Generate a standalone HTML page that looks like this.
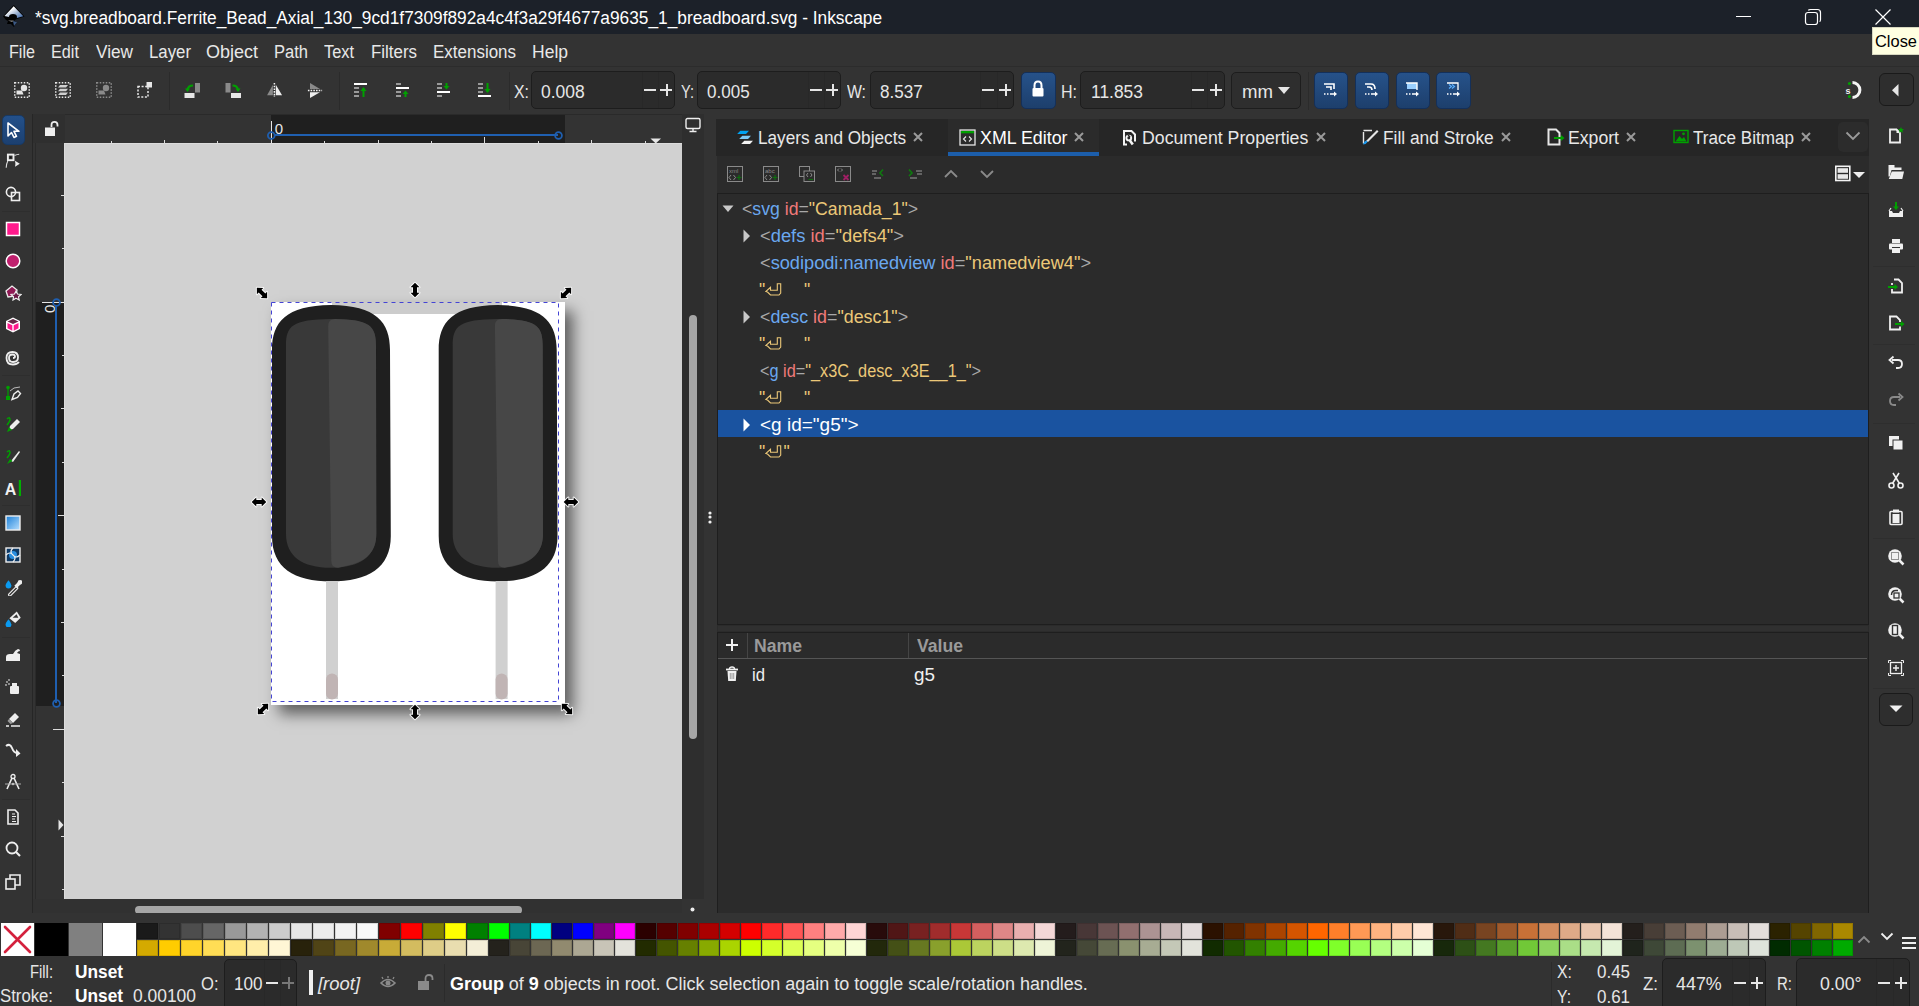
<!DOCTYPE html><html><head><meta charset="utf-8"><style>
html,body{margin:0;padding:0}
body{width:1919px;height:1006px;overflow:hidden;position:relative;background:#333333;font-family:"Liberation Sans",sans-serif}
.a{position:absolute}
.t{position:absolute;line-height:0;white-space:pre;transform-origin:0 0}
</style></head><body>
<div class="a" style="left:0px;top:0px;width:1919px;height:34px;background:#1c2129;"></div>
<svg class="a" style="left:0px;top:0px;" width="34" height="34" viewBox="0 0 34 34"><defs><linearGradient id="lg1" x1="0" y1="0" x2="1" y2="1"><stop offset="0.3" stop-color="#ffffff"/><stop offset="0.6" stop-color="#9fb3d0"/><stop offset="1" stop-color="#2f5fa8"/></linearGradient></defs><path d="M13.7 5 L24.5 16.5 L14 20 L16.5 22 L14 27 L11 24 L7 24 L8 21 L6 20 L3 16.5 Z" fill="#000"/><path d="M13.7 6.3 L23.3 16.3 L15 18.5 L11 17.5 L4.5 16 Z" fill="url(#lg1)"/><ellipse cx="13" cy="17" rx="4" ry="3" fill="#000"/><path d="M8 20.5 L14 20.5 L12 22 Z" fill="#888"/><path d="M13 21 L17 22 L14 26 Z" fill="#3d5a85"/></svg>
<div class="t" style="left:35px;top:17.79px;font-size:18px;color:#ffffff;transform:scaleX(0.9607);">*svg.breadboard.Ferrite_Bead_Axial_130_9cd1f7309f892a4c4f3a29f4677a9635_1_breadboard.svg - Inkscape</div>
<div class="a" style="left:1736px;top:16px;width:15px;height:1.2px;background:#ffffff;"></div>
<svg class="a" style="left:1803px;top:7px;" width="20" height="20" viewBox="0 0 20 20"><rect x="2.5" y="5.5" width="12" height="12" rx="2.5" fill="none" stroke="#fff" stroke-width="1.2"/><path d="M5.5 3.5 Q5.5 2.5 7.5 2.5 L14.5 2.5 Q17.5 2.5 17.5 5.5 L17.5 12.5 Q17.5 14.5 16.5 14.5" fill="none" stroke="#fff" stroke-width="1.2"/></svg>
<svg class="a" style="left:1874px;top:8px;" width="18" height="18" viewBox="0 0 18 18"><path d="M1.5 1.5 L16.5 16.5 M16.5 1.5 L1.5 16.5" stroke="#fff" stroke-width="1.2"/></svg>
<div class="a" style="left:0px;top:34px;width:1919px;height:32px;background:#333333;"></div>
<div class="t" style="left:8.7px;top:52.09px;font-size:18px;color:#e8e8e8;transform:scaleX(0.8964);">File</div>
<div class="t" style="left:50.7px;top:52.09px;font-size:18px;color:#e8e8e8;transform:scaleX(0.9027);">Edit</div>
<div class="t" style="left:96px;top:52.09px;font-size:18px;color:#e8e8e8;transform:scaleX(0.9563);">View</div>
<div class="t" style="left:149px;top:52.09px;font-size:18px;color:#e8e8e8;transform:scaleX(0.9328);">Layer</div>
<div class="t" style="left:206px;top:52.09px;font-size:18px;color:#e8e8e8;transform:scaleX(0.9996);">Object</div>
<div class="t" style="left:274.3px;top:52.09px;font-size:18px;color:#e8e8e8;transform:scaleX(0.9182);">Path</div>
<div class="t" style="left:324.3px;top:52.09px;font-size:18px;color:#e8e8e8;transform:scaleX(0.9088);">Text</div>
<div class="t" style="left:371px;top:52.09px;font-size:18px;color:#e8e8e8;transform:scaleX(0.9388);">Filters</div>
<div class="t" style="left:433.3px;top:52.09px;font-size:18px;color:#e8e8e8;transform:scaleX(0.9427);">Extensions</div>
<div class="t" style="left:532.3px;top:52.09px;font-size:18px;color:#e8e8e8;transform:scaleX(0.9725);">Help</div>
<div class="a" style="left:0px;top:66px;width:1919px;height:1px;background:#2c2c2c;"></div>
<div class="a" style="left:0px;top:67px;width:1919px;height:47px;background:#333333;"></div>
<div class="a" style="left:169px;top:72px;width:1px;height:38px;background:#2b2b2b;"></div>
<div class="a" style="left:338.7px;top:72px;width:1px;height:38px;background:#2b2b2b;"></div>
<div class="a" style="left:509px;top:72px;width:1px;height:38px;background:#2b2b2b;"></div>
<div class="a" style="left:1307.5px;top:72px;width:1px;height:38px;background:#2b2b2b;"></div>
<svg class="a" style="left:13.5px;top:81.5px;" width="16" height="16" viewBox="0 0 16 16"><rect x="0.75" y="0.75" width="14.5" height="14.5" stroke="#e6e6e6" stroke-width="1.5" stroke-dasharray="1.5 1.5" fill="none"/><circle cx="10" cy="6" r="3.2" fill="#e6e6e6"/><path d="M2.5 8.5 H8 L9.5 12.5 H2.5Z" fill="#e6e6e6"/></svg>
<svg class="a" style="left:54.5px;top:81.5px;" width="16" height="16" viewBox="0 0 16 16"><rect x="0.75" y="0.75" width="14.5" height="14.5" stroke="#e6e6e6" stroke-width="1.5" stroke-dasharray="1.5 1.5" fill="none"/><path d="M5 3 H13 L11 5.5 H3Z M5 6.8 H13 L11 9.3 H3Z M5 10.6 H13 L11 13 H3Z" fill="#d0d0d0"/></svg>
<svg class="a" style="left:95.5px;top:81.5px;" width="16" height="16" viewBox="0 0 16 16"><rect x="0.75" y="0.75" width="14.5" height="14.5" stroke="#8a8a8a" stroke-width="1.5" stroke-dasharray="1.5 1.5" fill="none"/><circle cx="10" cy="6" r="3.2" fill="#8a8a8a"/><path d="M2.5 8.5 H8 L9.5 12.5 H2.5Z" fill="#8a8a8a"/></svg>
<svg class="a" style="left:137.0px;top:81.5px;" width="16" height="16" viewBox="0 0 16 16"><rect x="1" y="4.5" width="10" height="10.5" stroke="#e6e6e6" stroke-width="1.5" stroke-dasharray="2 1.6" fill="none"/><rect x="9.5" y="0" width="5.5" height="5.5" fill="#e6e6e6"/></svg>
<svg class="a" style="left:184.0px;top:81.5px;" width="16" height="16" viewBox="0 0 16 16"><rect x="0.5" y="11" width="10" height="5" fill="#e6e6e6"/><rect x="11" y="1" width="5" height="9.5" fill="#8a8a8a"/><path d="M9 3.5 Q4 3.5 3.5 8" stroke="#00a000" stroke-width="2" fill="none"/><path d="M1 6.5 L3.5 10 L6 6.5Z" fill="#00a000"/></svg>
<svg class="a" style="left:225.0px;top:81.5px;" width="16" height="16" viewBox="0 0 16 16"><rect x="6" y="11" width="10" height="5" fill="#e6e6e6"/><rect x="0.5" y="1" width="5" height="9.5" fill="#8a8a8a"/><path d="M7.5 3.5 Q12.5 3.5 13 8" stroke="#00a000" stroke-width="2" fill="none"/><path d="M10.5 6.5 L13 10 L15.5 6.5Z" fill="#00a000"/></svg>
<svg class="a" style="left:266px;top:81px;" width="18" height="18" viewBox="0 0 18 18"><path d="M1.1 14.2 L6.9 14.2 L6.9 3.75Z" fill="#8a8a8a"/><path d="M9.8 3.75 L9.8 14.2 L16.1 14.2Z" fill="#eeeeee"/><path d="M8.4 2 V16" stroke="#f4f4f4" stroke-width="1.5" stroke-dasharray="1.6 1.1"/></svg>
<svg class="a" style="left:306px;top:81px;" width="18" height="18" viewBox="0 0 18 18"><path d="M4 2.1 L4 7.9 L14 7.9Z" fill="#8a8a8a"/><path d="M4 11.25 L14 11.25 L4 17Z" fill="#eeeeee"/><path d="M1.9 9.4 H16.1" stroke="#f4f4f4" stroke-width="1.5" stroke-dasharray="1.6 1.1"/></svg>
<svg class="a" style="left:353.0px;top:81.5px;" width="16" height="16" viewBox="0 0 16 16"><rect x="1" y="1" width="13" height="2" fill="#ffffff"/><rect x="1" y="5" width="5" height="2" fill="#9a9a9a"/><rect x="1" y="9" width="5" height="2" fill="#9a9a9a"/><rect x="1" y="13" width="5" height="2" fill="#9a9a9a"/><path d="M10.5 6 V15" stroke="#00a000" stroke-width="2"/><path d="M7.5 9 L10.5 5 L13.5 9Z" fill="#00a000"/></svg>
<svg class="a" style="left:394.5px;top:81.5px;" width="16" height="16" viewBox="0 0 16 16"><rect x="1" y="1" width="5" height="2" fill="#9a9a9a"/><rect x="1" y="5" width="13" height="2" fill="#ffffff"/><rect x="1" y="9" width="5" height="2" fill="#9a9a9a"/><rect x="1" y="13" width="5" height="2" fill="#9a9a9a"/><path d="M10.5 10 V15" stroke="#00a000" stroke-width="2"/><path d="M7.5 12 L10.5 8.5 L13.5 12Z" fill="#00a000"/></svg>
<svg class="a" style="left:435.5px;top:81.5px;" width="16" height="16" viewBox="0 0 16 16"><rect x="1" y="1" width="5" height="2" fill="#9a9a9a"/><rect x="1" y="5" width="5" height="2" fill="#9a9a9a"/><rect x="1" y="9" width="13" height="2" fill="#ffffff"/><rect x="1" y="13" width="5" height="2" fill="#9a9a9a"/><path d="M10.5 1 V6" stroke="#00a000" stroke-width="2"/><path d="M7.5 4 L10.5 7.5 L13.5 4Z" fill="#00a000"/></svg>
<svg class="a" style="left:476.5px;top:81.5px;" width="16" height="16" viewBox="0 0 16 16"><rect x="1" y="1" width="5" height="2" fill="#9a9a9a"/><rect x="1" y="5" width="5" height="2" fill="#9a9a9a"/><rect x="1" y="9" width="5" height="2" fill="#9a9a9a"/><rect x="1" y="13" width="13" height="2" fill="#ffffff"/><path d="M10.5 1 V10" stroke="#00a000" stroke-width="2"/><path d="M7.5 7 L10.5 11 L13.5 7Z" fill="#00a000"/></svg>
<div class="a" style="left:531.2px;top:71.3px;width:144.29999999999995px;height:38.2px;background:#2b2b2b;border:1px solid #1d1d1d;border-radius:5px;box-sizing:border-box"></div>
<div class="a" style="left:641.5px;top:72.3px;width:1px;height:36.2px;background:#282828;"></div>
<div class="a" style="left:658.0px;top:72.3px;width:1px;height:36.2px;background:#282828;"></div>
<div class="a" style="left:644px;top:89px;width:12px;height:2px;background:#e6e6e6;"></div>
<div class="a" style="left:660px;top:89px;width:12px;height:2px;background:#e6e6e6;"></div>
<div class="a" style="left:666px;top:84px;width:2px;height:12px;background:#e6e6e6;"></div>
<div class="t" style="left:513.8px;top:92.19px;font-size:18px;color:#e6e6e6;transform:scaleX(0.8820);">X:</div>
<div class="t" style="left:541px;top:92.19px;font-size:18px;color:#e6e6e6;transform:scaleX(0.9702);">0.008</div>
<div class="a" style="left:697.3px;top:71.3px;width:144.20000000000005px;height:38.2px;background:#2b2b2b;border:1px solid #1d1d1d;border-radius:5px;box-sizing:border-box"></div>
<div class="a" style="left:807.5px;top:72.3px;width:1px;height:36.2px;background:#282828;"></div>
<div class="a" style="left:824.0px;top:72.3px;width:1px;height:36.2px;background:#282828;"></div>
<div class="a" style="left:810px;top:89px;width:12px;height:2px;background:#e6e6e6;"></div>
<div class="a" style="left:826px;top:89px;width:12px;height:2px;background:#e6e6e6;"></div>
<div class="a" style="left:832px;top:84px;width:2px;height:12px;background:#e6e6e6;"></div>
<div class="t" style="left:681px;top:92.19px;font-size:18px;color:#e6e6e6;transform:scaleX(0.8118);">Y:</div>
<div class="t" style="left:707.4px;top:92.19px;font-size:18px;color:#e6e6e6;transform:scaleX(0.9457);">0.005</div>
<div class="a" style="left:870px;top:71.3px;width:144.39999999999998px;height:38.2px;background:#2b2b2b;border:1px solid #1d1d1d;border-radius:5px;box-sizing:border-box"></div>
<div class="a" style="left:980.4px;top:72.3px;width:1px;height:36.2px;background:#282828;"></div>
<div class="a" style="left:996.9px;top:72.3px;width:1px;height:36.2px;background:#282828;"></div>
<div class="a" style="left:982px;top:89px;width:12px;height:2px;background:#e6e6e6;"></div>
<div class="a" style="left:999px;top:89px;width:12px;height:2px;background:#e6e6e6;"></div>
<div class="a" style="left:1005px;top:84px;width:2px;height:12px;background:#e6e6e6;"></div>
<div class="t" style="left:847.4px;top:92.19px;font-size:18px;color:#e6e6e6;transform:scaleX(0.8770);">W:</div>
<div class="t" style="left:880px;top:92.19px;font-size:18px;color:#e6e6e6;transform:scaleX(0.9480);">8.537</div>
<div class="a" style="left:1080px;top:71.3px;width:144.5px;height:38.2px;background:#2b2b2b;border:1px solid #1d1d1d;border-radius:5px;box-sizing:border-box"></div>
<div class="a" style="left:1190.5px;top:72.3px;width:1px;height:36.2px;background:#282828;"></div>
<div class="a" style="left:1207.0px;top:72.3px;width:1px;height:36.2px;background:#282828;"></div>
<div class="a" style="left:1192px;top:89px;width:12px;height:2px;background:#e6e6e6;"></div>
<div class="a" style="left:1210px;top:89px;width:12px;height:2px;background:#e6e6e6;"></div>
<div class="a" style="left:1215px;top:84px;width:2px;height:12px;background:#e6e6e6;"></div>
<div class="t" style="left:1061px;top:92.19px;font-size:18px;color:#e6e6e6;transform:scaleX(0.8889);">H:</div>
<div class="t" style="left:1091px;top:92.19px;font-size:18px;color:#e6e6e6;transform:scaleX(0.9680);">11.853</div>
<div class="a" style="left:1020.5px;top:71.5px;width:35px;height:37.5px;background:linear-gradient(#26528a,#1d3f6c);border:1px solid #14305a;border-radius:5px;box-sizing:border-box"></div>
<svg class="a" style="left:1030px;top:80px;" width="16" height="18" viewBox="0 0 16 18"><path d="M4.5 8 V5.5 Q4.5 1.5 8 1.5 Q11.5 1.5 11.5 5.5 V8" stroke="#fff" stroke-width="2" fill="none"/><rect x="2.5" y="8" width="11" height="8.5" rx="1" fill="#fff"/></svg>
<div class="a" style="left:1230.5px;top:71.5px;width:70.5px;height:37.5px;background:#2e2e2e;border:1px solid #1d1d1d;border-radius:5px;box-sizing:border-box"></div>
<div class="t" style="left:1242px;top:92.19px;font-size:18px;color:#e6e6e6;transform:scaleX(1.0337);">mm</div>
<svg class="a" style="left:1278px;top:86.5px;" width="12" height="8" viewBox="0 0 12 8"><path d="M0 0 H12 L6 7Z" fill="#e6e6e6"/></svg>
<div class="a" style="left:1313.75px;top:71.5px;width:34.5px;height:37.5px;background:linear-gradient(#26528a,#1d3f6c);border:1px solid #14305a;border-radius:5px;box-sizing:border-box"></div>
<div class="a" style="left:1354.5px;top:71.5px;width:34.5px;height:37.5px;background:linear-gradient(#26528a,#1d3f6c);border:1px solid #14305a;border-radius:5px;box-sizing:border-box"></div>
<div class="a" style="left:1395.5px;top:71.5px;width:34.5px;height:37.5px;background:linear-gradient(#26528a,#1d3f6c);border:1px solid #14305a;border-radius:5px;box-sizing:border-box"></div>
<div class="a" style="left:1436px;top:71.5px;width:34.5px;height:37.5px;background:linear-gradient(#26528a,#1d3f6c);border:1px solid #14305a;border-radius:5px;box-sizing:border-box"></div>
<svg class="a" style="left:1322px;top:81px;" width="18" height="18" viewBox="0 0 18 18"><path d="M2 3 H12 V8" stroke="#fff" stroke-width="1.6" fill="none"/><path d="M4 6 H9 V9" stroke="#fff" stroke-width="1.6" fill="none"/><path d="M2 13 H3.5 M5 13 H6.5 M8 13 H12" stroke="#fff" stroke-width="1.6"/><path d="M12 10.5 L15 13 L12 15.5Z" fill="#fff"/></svg>
<svg class="a" style="left:1363px;top:81px;" width="18" height="18" viewBox="0 0 18 18"><path d="M2 3 H8 Q12 3 12 8" stroke="#fff" stroke-width="1.6" fill="none"/><path d="M4 6 H6 Q9 6 9 9" stroke="#fff" stroke-width="1.6" fill="none"/><path d="M2 13 H3.5 M5 13 H6.5 M8 13 H12" stroke="#fff" stroke-width="1.6"/><path d="M12 10.5 L15 13 L12 15.5Z" fill="#fff"/></svg>
<svg class="a" style="left:1404px;top:81px;" width="18" height="18" viewBox="0 0 18 18"><rect x="3" y="2" width="10" height="6" fill="#9ad0ff"/><path d="M2 2 H13 V9" stroke="#fff" stroke-width="1.4" fill="none"/><path d="M2 13 H3.5 M5 13 H6.5 M8 13 H12" stroke="#fff" stroke-width="1.6"/><path d="M12 10.5 L15 13 L12 15.5Z" fill="#fff"/></svg>
<svg class="a" style="left:1445px;top:81px;" width="18" height="18" viewBox="0 0 18 18"><path d="M2 2 H13 V9" stroke="#fff" stroke-width="1.3" fill="none"/><path d="M4 3.5 L6.5 5.5 L4 7.5 M7 3.5 L9.5 5.5 L7 7.5" stroke="#5ab0ff" stroke-width="1.2" fill="none"/><path d="M2 13 H3.5 M5 13 H6.5 M8 13 H12" stroke="#fff" stroke-width="1.6"/><path d="M12 10.5 L15 13 L12 15.5Z" fill="#fff"/></svg>
<svg class="a" style="left:1840px;top:78px;" width="26" height="24" viewBox="0 0 26 24"><path d="M12.5 4.6 A7.4 7.4 0 0 1 12.5 19.4" stroke="#f4f4f4" stroke-width="3" fill="none"/><circle cx="9.4" cy="5.6" r="1.5" fill="#00a000"/><circle cx="9.4" cy="18.4" r="1.5" fill="#00a000"/><text x="5.6" y="15.5" font-size="9" font-weight="bold" fill="#f0f0f0" font-family="Liberation Sans">s</text></svg>
<div class="a" style="left:1878.5px;top:73.4px;width:35px;height:33px;background:#2e2e2e;border:1px solid #1a1a1a;border-radius:6px;box-sizing:border-box"></div>
<svg class="a" style="left:1892px;top:84px;" width="8" height="13" viewBox="0 0 8 13"><path d="M6.5 0 V12.5 L0 6.25Z" fill="#e6e6e6"/></svg>
<div class="a" style="left:32px;top:114px;width:1px;height:807px;background:#262626;"></div>
<div class="a" style="left:2px;top:211px;width:28px;height:1px;background:#2e2e2e;"></div>
<div class="a" style="left:2px;top:374.6px;width:28px;height:1px;background:#2e2e2e;"></div>
<div class="a" style="left:2px;top:505px;width:28px;height:1px;background:#2e2e2e;"></div>
<div class="a" style="left:2px;top:636.6px;width:28px;height:1px;background:#2e2e2e;"></div>
<div class="a" style="left:2px;top:798.8px;width:28px;height:1px;background:#2e2e2e;"></div>
<div class="a" style="left:2px;top:115px;width:22.5px;height:30px;background:linear-gradient(#23508a,#1c4070);border:1px solid #173a66;border-radius:5px;box-sizing:border-box"></div>
<svg class="a" style="left:4.0px;top:121.0px;" width="18" height="18" viewBox="0 0 18 18"><path d="M4 2 L4 15 L7.5 11.5 L10 16.5 L12.5 15.3 L10 10.3 L15 10.3Z" stroke="#fff" stroke-width="1.6" fill="none" stroke-linejoin="round"/></svg>
<svg class="a" style="left:4px;top:153px;" width="18" height="18" viewBox="0 0 18 18"><rect x="3.9" y="1.6" width="5.6" height="5.6" fill="none" stroke="#eee" stroke-width="1.9"/><circle cx="6.7" cy="4.4" r="0.9" fill="#111"/><path d="M2.2 14.8 Q2.4 10.5 3.8 8" stroke="#ddd" stroke-width="1.1" fill="none"/><path d="M10.5 2.5 Q13 1.3 15.2 1.2" stroke="#ddd" stroke-width="1.1" fill="none"/><path d="M11 7.8 L15.8 10.8 L11 13.8 Q11.8 10.8 11 7.8Z" fill="#eee"/></svg>
<svg class="a" style="left:4.0px;top:184.7px;" width="18" height="18" viewBox="0 0 18 18"><circle cx="7" cy="7" r="4.6" fill="none" stroke="#eee" stroke-width="1.6"/><rect x="7.5" y="7.5" width="8" height="8" fill="none" stroke="#eee" stroke-width="1.6"/></svg>
<svg class="a" style="left:4.0px;top:220.0px;" width="18" height="18" viewBox="0 0 18 18"><rect x="2.5" y="2.5" width="13" height="13" fill="#ff1a8c" stroke="#fff" stroke-width="1.5"/></svg>
<svg class="a" style="left:4.0px;top:251.60000000000002px;" width="18" height="18" viewBox="0 0 18 18"><circle cx="9" cy="9" r="6.8" fill="#c0206e" stroke="#fff" stroke-width="1.5"/></svg>
<svg class="a" style="left:4.0px;top:283.0px;" width="18" height="18" viewBox="0 0 18 18"><path d="M2 8 L8 3 L13 7 L12 13 L4 14Z" fill="#901a55" stroke="#eee" stroke-width="1.3"/><path d="M12 8 L13.5 11 L17 11.5 L14.5 13.8 L15.2 17 L12 15.3 L9 17 L9.5 13.8 L7 11.5 L10.5 11Z" fill="#6a1845" stroke="#eee" stroke-width="1.2"/></svg>
<svg class="a" style="left:4.0px;top:315.9px;" width="18" height="18" viewBox="0 0 18 18"><path d="M9 1.5 L16 5 L16 13 L9 16.5 L2 13 L2 5Z" fill="#fff"/><path d="M9 3 L14.5 5.5 L9 8 L3.5 5.5Z" fill="#6a2848"/><path d="M3.5 7 L8.3 9.3 L8.3 14.8 L3.5 12.3Z" fill="#ff1a8c"/><path d="M9.7 9.3 L14.5 7 L14.5 12.3 L9.7 14.8Z" fill="#ff1a8c"/></svg>
<svg class="a" style="left:4.0px;top:348.7px;" width="18" height="18" viewBox="0 0 18 18"><path d="M9 9 Q11 9 11 7.5 Q11 5.5 8.5 5.5 Q5 5.5 5 9 Q5 13 9 13 Q14 13 14 8.5 Q14 3 8.5 3 Q2.5 3 2.5 9 Q2.5 15.5 9 15.5 Q13 15.5 15 13" stroke="#eee" stroke-width="1.8" fill="none"/></svg>
<svg class="a" style="left:4.0px;top:383.5px;" width="18" height="18" viewBox="0 0 18 18"><circle cx="4" cy="3.5" r="1.8" fill="#00a000"/><rect x="2" y="12" width="4" height="4" fill="#00a000"/><path d="M4 4 V12" stroke="#00a000" stroke-width="1.2"/><path d="M6 7 Q9 3 16 3" stroke="#bbb" stroke-width="1" fill="none"/><path d="M8 15.5 L10 10 L14 7 L16.5 9.5 L13.5 13.5Z" fill="none" stroke="#eee" stroke-width="1.4"/></svg>
<svg class="a" style="left:4.0px;top:415.3px;" width="18" height="18" viewBox="0 0 18 18"><path d="M3 4 Q6 1 6 5 Q5 8 3 10" stroke="#00a000" stroke-width="1.5" fill="none"/><path d="M5 15 L6 11 L13 4 L16 7 L9 14Z" fill="#eee"/><path d="M3 17 L5 12 L8 15Z" fill="#00a000"/></svg>
<svg class="a" style="left:4.0px;top:447.0px;" width="18" height="18" viewBox="0 0 18 18"><path d="M3 5 Q6 2 6 6 Q5 9 3 11" stroke="#00a000" stroke-width="1.5" fill="none"/><path d="M7 14 L15 4 L16 5 L9 15Z" fill="#eee"/><path d="M3 17 L6 12 L8.5 14Z" fill="#00a000"/></svg>
<svg class="a" style="left:4.0px;top:479.0px;" width="18" height="18" viewBox="0 0 18 18"><text x="0.8" y="15.6" font-family="Liberation Sans" font-weight="bold" font-size="16" fill="#f0f0f0">A</text><rect x="14.8" y="1" width="2.2" height="16" fill="#00b000"/></svg>
<svg class="a" style="left:4.0px;top:514.0px;" width="18" height="18" viewBox="0 0 18 18"><defs><linearGradient id="gt" x1="0" y1="0" x2="1" y2="1"><stop offset="0" stop-color="#1a7fd8"/><stop offset="1" stop-color="#b8e0ff"/></linearGradient></defs><rect x="2" y="2" width="14" height="14" fill="url(#gt)" stroke="#eee" stroke-width="1.4"/></svg>
<svg class="a" style="left:4.0px;top:545.7px;" width="18" height="18" viewBox="0 0 18 18"><rect x="2" y="2" width="14" height="14" fill="#0e3a66" stroke="#eee" stroke-width="1.4"/><circle cx="9" cy="9" r="4" fill="#2a8fe0"/><path d="M2 9 Q6 5 9 9 Q12 13 16 9 M9 2 Q5 6 9 9 Q13 12 9 16" stroke="#eee" stroke-width="1.2" fill="none"/></svg>
<svg class="a" style="left:4px;top:577.5px;" width="18" height="18" viewBox="0 0 18 18"><path d="M4.5 2.3 Q7.4 5.8 7.4 7.6 A2.9 2.9 0 0 1 1.6 7.6 Q1.6 5.8 4.5 2.3Z" fill="#0a9af0"/><path d="M5.8 16.8 L12.5 10" stroke="#eee" stroke-width="3.6" stroke-linecap="round"/><path d="M5.8 16.8 L12.5 10" stroke="#333" stroke-width="1.3" stroke-linecap="round"/><path d="M11.5 9 L16 4.5" stroke="#eee" stroke-width="3.4"/><circle cx="16" cy="4.2" r="2.3" fill="#eee"/></svg>
<svg class="a" style="left:4px;top:609px;" width="18" height="18" viewBox="0 0 18 18"><path d="M4.5 10.3 Q7.4 13.8 7.4 15.6 A2.9 2.9 0 0 1 1.6 15.6 Q1.6 13.8 4.5 10.3Z" fill="#0a9af0"/><path d="M5.4 9.2 L12.8 2.4 L16.7 8.8 L11.2 14Z" fill="#eee"/><path d="M8.6 8.8 L12.6 5.2 L14.3 8.8Z" fill="#333"/></svg>
<svg class="a" style="left:4.0px;top:645.0px;" width="18" height="18" viewBox="0 0 18 18"><path d="M2 16 V12 Q2 9 6 9 L9 9 Q11 5 14 4 Q16 4 16 6 Q14 6 13 8 L16 9 V16Z" fill="#eee"/></svg>
<svg class="a" style="left:4.0px;top:677.0px;" width="18" height="18" viewBox="0 0 18 18"><rect x="6" y="9" width="9" height="8" rx="1" fill="#eee"/><rect x="8" y="6" width="5" height="3" fill="#eee"/><circle cx="3" cy="5" r="0.9" fill="#bbb"/><circle cx="5" cy="3" r="0.9" fill="#bbb"/><circle cx="2" cy="8" r="0.9" fill="#bbb"/><circle cx="5" cy="7" r="0.9" fill="#bbb"/></svg>
<svg class="a" style="left:4.0px;top:710.0px;" width="18" height="18" viewBox="0 0 18 18"><path d="M5 9 L11 3 L15 7 L9 13Z" fill="#eee"/><path d="M5 9 L9 13 L6.5 14 L3.5 11Z" fill="#999"/><path d="M2 16 H5 M7 16 H16" stroke="#eee" stroke-width="1.6"/></svg>
<svg class="a" style="left:4.0px;top:740.7px;" width="18" height="18" viewBox="0 0 18 18"><path d="M2 5 Q6 2 8 7 Q10 12 13 12" stroke="#eee" stroke-width="2" fill="none"/><path d="M12 8 L16.5 12.5 L12 16Z" fill="#eee"/></svg>
<svg class="a" style="left:4.0px;top:772.5px;" width="18" height="18" viewBox="0 0 18 18"><circle cx="9" cy="3.5" r="2" fill="none" stroke="#eee" stroke-width="1.3"/><path d="M8 5 L3 16 M10 5 L15 16" stroke="#eee" stroke-width="1.6"/><path d="M1 11 H17" stroke="#aaa" stroke-width="1"/><circle cx="9" cy="11" r="1.3" fill="#bbb"/></svg>
<svg class="a" style="left:4.0px;top:808.3px;" width="18" height="18" viewBox="0 0 18 18"><path d="M4 2 H11 L14 5 V16 H4Z" fill="none" stroke="#eee" stroke-width="1.6"/><path d="M8 6 H11 M8 8.5 H12 M8 11 H11 M8 13.5 H12" stroke="#eee" stroke-width="1.2"/></svg>
<svg class="a" style="left:4.0px;top:840.0px;" width="18" height="18" viewBox="0 0 18 18"><circle cx="8" cy="8" r="5.5" fill="none" stroke="#eee" stroke-width="1.8"/><path d="M12 12 L16 16" stroke="#eee" stroke-width="2.2"/></svg>
<svg class="a" style="left:4.0px;top:873.0px;" width="18" height="18" viewBox="0 0 18 18"><rect x="2" y="6" width="9" height="10" fill="none" stroke="#eee" stroke-width="1.6"/><path d="M6 6 V2 H16 V12 H11" fill="none" stroke="#eee" stroke-width="1.6"/></svg>
<div class="a" style="left:33px;top:114px;width:32px;height:29px;background:#2f2f2f;"></div>
<svg class="a" style="left:43px;top:120px;" width="18" height="18" viewBox="0 0 18 18"><path d="M8.5 7 V5 Q8.5 1.8 11.5 1.8 Q14.5 1.8 14.5 5 V6.5" stroke="#eee" stroke-width="1.8" fill="none"/><rect x="2" y="7.5" width="10" height="8.5" fill="#eee"/></svg>
<div class="a" style="left:65px;top:114px;width:617px;height:29px;background:#333333;"></div>
<div class="a" style="left:270.8px;top:114px;width:294.6px;height:29px;background:#1f1f1f;"></div>
<div class="a" style="left:65px;top:114px;width:617px;height:1px;background:#2a2a2a;"></div>
<div class="a" style="left:64px;top:143px;width:618px;height:1px;background:#dcdcdc;"></div>
<div class="a" style="left:110.60000000000002px;top:141px;width:1px;height:2px;background:#dcdcdc;"></div>
<div class="a" style="left:164.0px;top:139.5px;width:1px;height:3.5px;background:#dcdcdc;"></div>
<div class="a" style="left:217.4px;top:141px;width:1px;height:2px;background:#dcdcdc;"></div>
<div class="a" style="left:270.8px;top:121px;width:1px;height:22px;background:#e6e6e6;"></div>
<div class="a" style="left:324.2px;top:141px;width:1px;height:2px;background:#dcdcdc;"></div>
<div class="a" style="left:377.6px;top:139.5px;width:1px;height:3.5px;background:#dcdcdc;"></div>
<div class="a" style="left:431.0px;top:141px;width:1px;height:2px;background:#dcdcdc;"></div>
<div class="a" style="left:484.4px;top:137px;width:1px;height:6px;background:#dcdcdc;"></div>
<div class="a" style="left:537.8px;top:141px;width:1px;height:2px;background:#dcdcdc;"></div>
<div class="a" style="left:591.2px;top:139.5px;width:1px;height:3.5px;background:#dcdcdc;"></div>
<div class="a" style="left:644.6px;top:141px;width:1px;height:2px;background:#dcdcdc;"></div>
<div class="t" style="left:274.8px;top:128.52px;font-size:15px;color:#e6e6e6;">0</div>
<div class="a" style="left:274px;top:134.2px;width:284px;height:2px;background:#1f5fb0;"></div>
<svg class="a" style="left:266px;top:129.5px;" width="11" height="11" viewBox="0 0 11 11"><circle cx="5.3" cy="5.5" r="3.4" fill="none" stroke="#1f5fb0" stroke-width="1.8"/></svg>
<svg class="a" style="left:553px;top:129.5px;" width="11" height="11" viewBox="0 0 11 11"><circle cx="5.5" cy="5.5" r="3.4" fill="none" stroke="#1f5fb0" stroke-width="1.8"/></svg>
<svg class="a" style="left:650px;top:138px;" width="12" height="6" viewBox="0 0 12 6"><path d="M0.5 0.5 H11 L5.75 5.5Z" fill="#e6e6e6"/></svg>
<div class="a" style="left:33px;top:143px;width:32px;height:756px;background:#333333;"></div>
<div class="a" style="left:35.4px;top:143px;width:1px;height:756px;background:#2a2a2a;"></div>
<div class="a" style="left:36px;top:302px;width:28px;height:403.5px;background:#1f1f1f;"></div>
<div class="a" style="left:64px;top:143px;width:1px;height:756px;background:#dcdcdc;"></div>
<div class="a" style="left:60.5px;top:194.7px;width:3.5px;height:1px;background:#dcdcdc;"></div>
<div class="a" style="left:62px;top:248.1px;width:2px;height:1px;background:#dcdcdc;"></div>
<div class="a" style="left:42px;top:301.5px;width:22px;height:1px;background:#e6e6e6;"></div>
<div class="a" style="left:62px;top:354.9px;width:2px;height:1px;background:#dcdcdc;"></div>
<div class="a" style="left:60.5px;top:408.3px;width:3.5px;height:1px;background:#dcdcdc;"></div>
<div class="a" style="left:62px;top:461.7px;width:2px;height:1px;background:#dcdcdc;"></div>
<div class="a" style="left:58px;top:515.1px;width:6px;height:1px;background:#dcdcdc;"></div>
<div class="a" style="left:62px;top:568.5px;width:2px;height:1px;background:#dcdcdc;"></div>
<div class="a" style="left:60.5px;top:621.9px;width:3.5px;height:1px;background:#dcdcdc;"></div>
<div class="a" style="left:62px;top:675.3px;width:2px;height:1px;background:#dcdcdc;"></div>
<div class="a" style="left:53px;top:728.7px;width:11px;height:1px;background:#dcdcdc;"></div>
<div class="a" style="left:62px;top:782.0999999999999px;width:2px;height:1px;background:#dcdcdc;"></div>
<div class="a" style="left:60.5px;top:835.5px;width:3.5px;height:1px;background:#dcdcdc;"></div>
<div class="a" style="left:62px;top:888.9px;width:2px;height:1px;background:#dcdcdc;"></div>
<div class="t" style="left:41.5px;top:312.5px;font-size:15px;color:#e6e6e6;transform:rotate(-90deg);transform-origin:0 0;line-height:1">0</div>
<div class="a" style="left:55px;top:306px;width:2px;height:397px;background:#1f5fb0;"></div>
<svg class="a" style="left:50.5px;top:296.5px;" width="11" height="11" viewBox="0 0 11 11"><circle cx="5.5" cy="5.5" r="3.4" fill="none" stroke="#1f5fb0" stroke-width="1.8"/></svg>
<svg class="a" style="left:50.5px;top:697.5px;" width="11" height="11" viewBox="0 0 11 11"><circle cx="5.5" cy="5.5" r="3.4" fill="none" stroke="#1f5fb0" stroke-width="1.8"/></svg>
<svg class="a" style="left:58px;top:819px;" width="6" height="12" viewBox="0 0 6 12"><path d="M0.5 0.5 V11.5 L5.5 6Z" fill="#e6e6e6"/></svg>
<div class="a" style="left:65px;top:144px;width:617px;height:755px;background:#d1d1d1;"></div>
<div class="a" style="left:271px;top:302px;width:294px;height:403px;background:#fff;box-shadow:8px 9px 14px 0px rgba(0,0,0,0.55)"></div>
<svg class="a" style="left:0;top:0" width="682" height="899" viewBox="0 0 682 899"><rect x="332" y="302" width="170" height="12" fill="#cccccc"/><g transform="translate(0,0)">
<path d="M272 350 C272 322 286 305.5 331 305 C376 305.5 390 322 390 350 L390.8 536 C390.8 568 368 581.4 331 581.4 C294 581.4 272 568 272 536 Z" fill="#1f1f1f"/>
<path d="M286 346 C286 326 292 319.5 331 319 C370 319.5 376 326 376 346 L376.3 534 C376.3 556 360 567.8 331 567.8 C302 567.8 286 556 286 534 Z" fill="#393939"/>
<path d="M328.2 326 Q328.2 319.2 335 319.1 C370 319.5 376 326 376 346 L376.3 534 C376.3 552 366 561 350 565 L338 567.8 Q331.3 567.8 331.3 561 Z" fill="#474747"/>
<rect x="326" y="581" width="12" height="118" fill="#d0d0d0"/>
<rect x="326" y="673.4" width="12" height="26" rx="6" fill="#c0b4b4"/>
</g><g transform="translate(166.7,0)">
<path d="M272 350 C272 322 286 305.5 331 305 C376 305.5 390 322 390 350 L390.8 536 C390.8 568 368 581.4 331 581.4 C294 581.4 272 568 272 536 Z" fill="#1f1f1f"/>
<path d="M286 346 C286 326 292 319.5 331 319 C370 319.5 376 326 376 346 L376.3 534 C376.3 556 360 567.8 331 567.8 C302 567.8 286 556 286 534 Z" fill="#393939"/>
<path d="M328.2 326 Q328.2 319.2 335 319.1 C370 319.5 376 326 376 346 L376.3 534 C376.3 552 366 561 350 565 L338 567.8 Q331.3 567.8 331.3 561 Z" fill="#474747"/>
<rect x="328.9" y="581" width="12" height="118" fill="#d0d0d0"/>
<rect x="328.9" y="673.4" width="12" height="26" rx="6" fill="#c0b4b4"/>
</g><rect x="271.5" y="302.5" width="287" height="399" fill="none" stroke="#4444d4" stroke-width="1" stroke-dasharray="4 4"/></svg>
<svg class="a" style="left:253px;top:284px;" width="18" height="18" viewBox="0 0 18 18"><g transform="translate(9,9) rotate(45)"><path d="M-7.3 0 L-2.7 -4.5 L-2.7 -2 L2.7 -2 L2.7 -4.5 L7.3 0 L2.7 4.5 L2.7 2 L-2.7 2 L-2.7 4.5Z" fill="#000" stroke="rgba(255,255,255,0.85)" stroke-width="2" stroke-linejoin="round" paint-order="stroke"/></g></svg>
<svg class="a" style="left:406px;top:281px;" width="18" height="18" viewBox="0 0 18 18"><g transform="translate(9,9) rotate(90)"><path d="M-7.3 0 L-2.7 -4.5 L-2.7 -2 L2.7 -2 L2.7 -4.5 L7.3 0 L2.7 4.5 L2.7 2 L-2.7 2 L-2.7 4.5Z" fill="#000" stroke="rgba(255,255,255,0.85)" stroke-width="2" stroke-linejoin="round" paint-order="stroke"/></g></svg>
<svg class="a" style="left:557px;top:284px;" width="18" height="18" viewBox="0 0 18 18"><g transform="translate(9,9) rotate(-45)"><path d="M-7.3 0 L-2.7 -4.5 L-2.7 -2 L2.7 -2 L2.7 -4.5 L7.3 0 L2.7 4.5 L2.7 2 L-2.7 2 L-2.7 4.5Z" fill="#000" stroke="rgba(255,255,255,0.85)" stroke-width="2" stroke-linejoin="round" paint-order="stroke"/></g></svg>
<svg class="a" style="left:250px;top:493px;" width="18" height="18" viewBox="0 0 18 18"><g transform="translate(9,9) rotate(0)"><path d="M-7.3 0 L-2.7 -4.5 L-2.7 -2 L2.7 -2 L2.7 -4.5 L7.3 0 L2.7 4.5 L2.7 2 L-2.7 2 L-2.7 4.5Z" fill="#000" stroke="rgba(255,255,255,0.85)" stroke-width="2" stroke-linejoin="round" paint-order="stroke"/></g></svg>
<svg class="a" style="left:562px;top:493px;" width="18" height="18" viewBox="0 0 18 18"><g transform="translate(9,9) rotate(0)"><path d="M-7.3 0 L-2.7 -4.5 L-2.7 -2 L2.7 -2 L2.7 -4.5 L7.3 0 L2.7 4.5 L2.7 2 L-2.7 2 L-2.7 4.5Z" fill="#000" stroke="rgba(255,255,255,0.85)" stroke-width="2" stroke-linejoin="round" paint-order="stroke"/></g></svg>
<svg class="a" style="left:254px;top:700px;" width="18" height="18" viewBox="0 0 18 18"><g transform="translate(9,9) rotate(-45)"><path d="M-7.3 0 L-2.7 -4.5 L-2.7 -2 L2.7 -2 L2.7 -4.5 L7.3 0 L2.7 4.5 L2.7 2 L-2.7 2 L-2.7 4.5Z" fill="#000" stroke="rgba(255,255,255,0.85)" stroke-width="2" stroke-linejoin="round" paint-order="stroke"/></g></svg>
<svg class="a" style="left:406px;top:703px;" width="18" height="18" viewBox="0 0 18 18"><g transform="translate(9,9) rotate(90)"><path d="M-7.3 0 L-2.7 -4.5 L-2.7 -2 L2.7 -2 L2.7 -4.5 L7.3 0 L2.7 4.5 L2.7 2 L-2.7 2 L-2.7 4.5Z" fill="#000" stroke="rgba(255,255,255,0.85)" stroke-width="2" stroke-linejoin="round" paint-order="stroke"/></g></svg>
<svg class="a" style="left:558px;top:700px;" width="18" height="18" viewBox="0 0 18 18"><g transform="translate(9,9) rotate(45)"><path d="M-7.3 0 L-2.7 -4.5 L-2.7 -2 L2.7 -2 L2.7 -4.5 L7.3 0 L2.7 4.5 L2.7 2 L-2.7 2 L-2.7 4.5Z" fill="#000" stroke="rgba(255,255,255,0.85)" stroke-width="2" stroke-linejoin="round" paint-order="stroke"/></g></svg>
<div class="a" style="left:682px;top:114px;width:22px;height:785px;background:#2e2e2e;"></div>
<svg class="a" style="left:684px;top:117px;" width="18" height="16" viewBox="0 0 18 16"><rect x="2" y="1.5" width="14" height="10" rx="1.5" fill="none" stroke="#eee" stroke-width="1.4"/><path d="M9 11.5 V14 M5.5 14.5 H12.5" stroke="#eee" stroke-width="1.4"/></svg>
<div class="a" style="left:689px;top:315px;width:8px;height:424px;background:#a6a6a6;border-radius:4px"></div>
<div class="a" style="left:33px;top:899px;width:649px;height:22px;background:#313131;"></div>
<div class="a" style="left:682px;top:899px;width:22px;height:17px;background:#333333;"></div>
<div class="a" style="left:135px;top:906px;width:387px;height:8px;background:#a6a6a6;border-radius:4px"></div>
<svg class="a" style="left:689px;top:906px;" width="7" height="7" viewBox="0 0 7 7"><circle cx="3.5" cy="3.5" r="2" fill="#eee"/></svg>
<div class="a" style="left:704px;top:114px;width:13.7px;height:799px;background:#333333;"></div>
<div class="a" style="left:717.7px;top:155px;width:1px;height:758px;background:#1e1e1e;"></div>
<svg class="a" style="left:708px;top:510.6px;" width="4" height="4" viewBox="0 0 4 4"><circle cx="2" cy="2" r="1.6" fill="#f0f0f0"/></svg>
<svg class="a" style="left:708px;top:515px;" width="4" height="4" viewBox="0 0 4 4"><circle cx="2" cy="2" r="1.6" fill="#f0f0f0"/></svg>
<svg class="a" style="left:708px;top:519.5px;" width="4" height="4" viewBox="0 0 4 4"><circle cx="2" cy="2" r="1.6" fill="#f0f0f0"/></svg>
<div class="a" style="left:716px;top:119px;width:1153px;height:36.7px;background:#262626;"></div>
<div class="a" style="left:948px;top:119px;width:151px;height:36.7px;background:#2b2b2b;"></div>
<div class="a" style="left:948px;top:152px;width:151px;height:3.7px;background:#1c5eab;"></div>
<div class="a" style="left:716.7px;top:155.7px;width:1152.5px;height:757.3px;background:#2b2b2b;"></div>
<svg class="a" style="left:736px;top:129px;" width="18" height="16" viewBox="0 0 18 16"><path d="M4.3 1.8 H13 L10 5 H1.2Z" fill="#00a2f0"/><path d="M6.3 6.8 H15 L12 10 H3.2Z" fill="#7ccaf5"/><path d="M8.3 11.8 H17 L14 15 H5.2Z" fill="#f2f2f2"/></svg>
<div class="t" style="left:757.7px;top:137.99px;font-size:18px;color:#e8e8e8;transform:scaleX(0.9543);">Layers and Objects</div>
<svg class="a" style="left:913px;top:132px;" width="10" height="10" viewBox="0 0 10 10"><path d="M1 1 L9 9 M9 1 L1 9" stroke="#9a9a9a" stroke-width="2"/></svg>
<svg class="a" style="left:1074px;top:132px;" width="10" height="10" viewBox="0 0 10 10"><path d="M1 1 L9 9 M9 1 L1 9" stroke="#9a9a9a" stroke-width="2"/></svg>
<svg class="a" style="left:959px;top:129px;" width="18" height="18" viewBox="0 0 18 18"><rect x="1" y="1" width="15" height="15" fill="none" stroke="#e6e6e6" stroke-width="1.3"/><rect x="2" y="2" width="13" height="2.3" fill="#00a000"/><path d="M7 7.5 L4.5 10 L7 12.5 M10 7.5 L12.5 10 L10 12.5" stroke="#e6e6e6" stroke-width="1.1" fill="none"/></svg>
<div class="t" style="left:979.5px;top:137.99px;font-size:18px;color:#ffffff;transform:scaleX(0.9902);">XML Editor</div>
<svg class="a" style="left:1122px;top:129px;" width="15" height="17" viewBox="0 0 15 17"><path d="M5 15.5 H2 V2 H9.5 L13 5.5 V12.5" fill="none" stroke="#f4f4f4" stroke-width="2"/><circle cx="6.8" cy="9" r="2.4" fill="none" stroke="#f4f4f4" stroke-width="1.9"/><path d="M7.5 11 L10.8 15.5" stroke="#f4f4f4" stroke-width="2.6"/><path d="M6 6 L8 8" stroke="#262626" stroke-width="1.5"/></svg>
<div class="t" style="left:1141.7px;top:137.99px;font-size:18px;color:#e8e8e8;transform:scaleX(0.9836);">Document Properties</div>
<svg class="a" style="left:1316px;top:132px;" width="10" height="10" viewBox="0 0 10 10"><path d="M1 1 L9 9 M9 1 L1 9" stroke="#9a9a9a" stroke-width="2"/></svg>
<svg class="a" style="left:1362px;top:128px;" width="18" height="18" viewBox="0 0 18 18"><path d="M1.5 4 V15.5 H1.5 M1.5 2.5 H10" stroke="#e6e6e6" stroke-width="1.4" fill="none"/><path d="M4 13 L15 2 L16.5 3.5 L6 14Z" fill="#e6e6e6"/><path d="M1 16.5 Q2 13 4.5 12.5 L5.5 14 Q4 16.5 1 16.5Z" fill="#1d9bf0"/></svg>
<div class="t" style="left:1383px;top:137.99px;font-size:18px;color:#e8e8e8;transform:scaleX(0.9626);">Fill and Stroke</div>
<svg class="a" style="left:1501px;top:132px;" width="10" height="10" viewBox="0 0 10 10"><path d="M1 1 L9 9 M9 1 L1 9" stroke="#9a9a9a" stroke-width="2"/></svg>
<svg class="a" style="left:1547px;top:128px;" width="19" height="18" viewBox="0 0 19 18"><path d="M1.5 1.5 H9 L12.5 5 V16.5 H1.5Z" fill="none" stroke="#e6e6e6" stroke-width="2"/><path d="M7 10 H16" stroke="#00a000" stroke-width="2"/><path d="M14 7 L17.5 10 L14 13Z" fill="#00a000"/></svg>
<div class="t" style="left:1568px;top:137.99px;font-size:18px;color:#e8e8e8;transform:scaleX(0.9803);">Export</div>
<svg class="a" style="left:1626px;top:132px;" width="10" height="10" viewBox="0 0 10 10"><path d="M1 1 L9 9 M9 1 L1 9" stroke="#9a9a9a" stroke-width="2"/></svg>
<svg class="a" style="left:1673px;top:129px;" width="16" height="15" viewBox="0 0 16 15"><rect x="1" y="1.5" width="14" height="12" fill="none" stroke="#00a000" stroke-width="1.4"/><path d="M2.5 12.5 L6.5 7 L9 10 L11 8 L13.5 12.5Z" fill="#00a000"/><circle cx="10.5" cy="4.8" r="1.4" fill="#00a000"/></svg>
<div class="t" style="left:1693px;top:137.99px;font-size:18px;color:#e8e8e8;transform:scaleX(0.9496);">Trace Bitmap</div>
<svg class="a" style="left:1801px;top:132px;" width="10" height="10" viewBox="0 0 10 10"><path d="M1 1 L9 9 M9 1 L1 9" stroke="#9a9a9a" stroke-width="2"/></svg>
<div class="a" style="left:1838px;top:122px;width:30px;height:30px;background:#2c2c2c;border-radius:5px"></div>
<svg class="a" style="left:1845px;top:131px;" width="16" height="10" viewBox="0 0 16 10"><path d="M1.5 1.5 L8 8 L14.5 1.5" stroke="#9a9a9a" stroke-width="1.8" fill="none"/></svg>
<svg class="a" style="left:726px;top:165px;" width="18" height="18" viewBox="0 0 18 18"><rect x="1.5" y="1.5" width="15" height="15" stroke="#8a8a8a" stroke-width="1" fill="none"/><text x="3" y="8" font-size="6" fill="#8a8a8a" font-family="Liberation Sans">xml</text><path d="M5 10 L3 12.5 L5 15 M7.5 10 L9.5 12.5 L7.5 15" stroke="#8a8a8a" stroke-width="1" fill="none"/><path d="M13 10 V15 M10.5 12.5 H15.5" stroke="#0e6e0e" stroke-width="1.2"/></svg>
<svg class="a" style="left:762px;top:165px;" width="18" height="18" viewBox="0 0 18 18"><rect x="1.5" y="1.5" width="15" height="15" stroke="#8a8a8a" stroke-width="1" fill="none"/><text x="3" y="8" font-size="6" fill="#8a8a8a" font-family="Liberation Sans">abc</text><path d="M5 10 L3 12.5 L5 15 M7.5 10 L9.5 12.5 L7.5 15" stroke="#8a8a8a" stroke-width="1" fill="none"/><path d="M13 10 V15 M10.5 12.5 H15.5" stroke="#0e6e0e" stroke-width="1.2"/></svg>
<svg class="a" style="left:798px;top:165px;" width="18" height="18" viewBox="0 0 18 18"><rect x="1.5" y="1.5" width="10" height="10" stroke="#8a8a8a" stroke-width="1" fill="none"/><rect x="6" y="6" width="10.5" height="10.5" fill="#2b2b2b" stroke="#8a8a8a" stroke-width="1"/><path d="M10 8 L8.5 10 L10 12 M12.5 8 L14 10 L12.5 12" stroke="#8a8a8a" stroke-width="1" fill="none"/><path d="M10.5 14.5 H15" stroke="#0e6e0e" stroke-width="1.2"/></svg>
<svg class="a" style="left:834px;top:165px;" width="18" height="18" viewBox="0 0 18 18"><rect x="1.5" y="1.5" width="15" height="15" stroke="#8a8a8a" stroke-width="1" fill="none"/><path d="M5 3.5 L3.5 5 L5 6.5 M7 3.5 L8.5 5 L7 6.5" stroke="#8a8a8a" stroke-width="1" fill="none"/><path d="M9.5 10 L14.5 15 M14.5 10 L9.5 15" stroke="#a01e64" stroke-width="1.8"/></svg>
<svg class="a" style="left:870px;top:165px;" width="18" height="18" viewBox="0 0 18 18"><path d="M2 6 H7 M2 9 H6 M4 13 H11" stroke="#777" stroke-width="1.5"/><path d="M13 4.5 L10 8 L13 11" stroke="#0e7a0e" stroke-width="1.6" fill="none"/></svg>
<svg class="a" style="left:906px;top:165px;" width="18" height="18" viewBox="0 0 18 18"><path d="M10 6 H16 M11 9 H16 M4 13 H11" stroke="#777" stroke-width="1.5"/><path d="M3 4.5 L6 8 L3 11" stroke="#0e7a0e" stroke-width="1.6" fill="none"/></svg>
<svg class="a" style="left:942px;top:165px;" width="18" height="18" viewBox="0 0 18 18"><path d="M3 12 L9 6 L15 12" stroke="#8a8a8a" stroke-width="1.8" fill="none"/></svg>
<svg class="a" style="left:978px;top:165px;" width="18" height="18" viewBox="0 0 18 18"><path d="M3 6 L9 12 L15 6" stroke="#8a8a8a" stroke-width="1.8" fill="none"/></svg>
<svg class="a" style="left:1834px;top:164px;" width="32" height="18" viewBox="0 0 32 18"><rect x="1.8" y="2.3" width="14" height="14.2" fill="none" stroke="#f4f4f4" stroke-width="1.6"/><rect x="3.6" y="4.2" width="10.4" height="4.6" fill="#e8e8e8"/><rect x="3.6" y="10.2" width="10.4" height="4.6" fill="#e8e8e8"/><path d="M19 8 H31 L25 14Z" fill="#eeeeee"/></svg>
<div class="a" style="left:717px;top:192.7px;width:1152px;height:432.3px;border:1px solid #1e1e1e;box-sizing:border-box;background:#2b2b2b"></div>
<div class="a" style="left:718px;top:626px;width:1150px;height:5px;background:#303030;"></div>
<div class="a" style="left:717px;top:631.5px;width:1152px;height:282.5px;border:1px solid #1e1e1e;box-sizing:border-box;background:#2b2b2b"></div>
<div class="a" style="left:718px;top:658.3px;width:1149px;height:1px;background:#555555;"></div>
<div class="a" style="left:746.5px;top:633px;width:1px;height:25.3px;background:#454545;"></div>
<div class="a" style="left:908px;top:633px;width:1px;height:25.3px;background:#454545;"></div>
<svg class="a" style="left:725px;top:638px;" width="14" height="14" viewBox="0 0 14 14"><path d="M7 1 V13 M1 7 H13" stroke="#f0f0f0" stroke-width="2"/></svg>
<div class="t" style="left:753.7px;top:646.49px;font-size:18px;color:#9a9a9a;font-weight:bold;transform:scaleX(0.9791);">Name</div>
<div class="t" style="left:917px;top:646.49px;font-size:18px;color:#9a9a9a;font-weight:bold;transform:scaleX(0.9781);">Value</div>
<svg class="a" style="left:725px;top:666px;" width="14" height="16" viewBox="0 0 14 16"><path d="M1 3.5 H13" stroke="#f0f0f0" stroke-width="1.8"/><path d="M4.5 3 Q4.5 1 7 1 Q9.5 1 9.5 3" stroke="#f0f0f0" stroke-width="1.4" fill="none"/><path d="M2.5 5 H11.5 L10.8 15 H3.2Z" fill="#f0f0f0"/><path d="M5.3 7 V13 M7 7 V13 M8.7 7 V13" stroke="#888" stroke-width="0.8"/></svg>
<div class="t" style="left:752px;top:675.49px;font-size:18px;color:#f0f0f0;transform:scaleX(0.9279);">id</div>
<div class="t" style="left:914px;top:675.49px;font-size:18px;color:#f0f0f0;transform:scaleX(1.0489);">g5</div>
<div class="a" style="left:718px;top:410.2px;width:1150px;height:26.8px;background:#1a53a0;"></div>
<svg class="a" style="left:722px;top:205px;" width="12" height="8" viewBox="0 0 12 8"><path d="M0.5 0.5 H11.5 L6 7Z" fill="#c8c8c8"/></svg>
<div class="t" style="left:742px;top:208.76px;font-size:17.5px;transform:scaleX(1.0091)"><span style="color:#a8a8a8">&lt;</span><span style="color:#6aa8f0">svg</span><span style="color:#a8a8a8"> </span><span style="color:#f07a7a">id</span><span style="color:#a8a8a8">=</span><span style="color:#ecc878">&quot;Camada_1&quot;</span><span style="color:#a8a8a8">&gt;</span></div>
<svg class="a" style="left:742.5px;top:229px;" width="8" height="14" viewBox="0 0 8 14"><path d="M0.5 0.5 V13.5 L7 7Z" fill="#c8c8c8"/></svg>
<div class="t" style="left:760px;top:235.76px;font-size:17.5px;transform:scaleX(1.0476)"><span style="color:#a8a8a8">&lt;</span><span style="color:#6aa8f0">defs</span><span style="color:#a8a8a8"> </span><span style="color:#f07a7a">id</span><span style="color:#a8a8a8">=</span><span style="color:#ecc878">&quot;defs4&quot;</span><span style="color:#a8a8a8">&gt;</span></div>
<div class="t" style="left:760px;top:262.76px;font-size:17.5px;transform:scaleX(1.0396)"><span style="color:#a8a8a8">&lt;</span><span style="color:#6aa8f0">sodipodi:namedview</span><span style="color:#a8a8a8"> </span><span style="color:#f07a7a">id</span><span style="color:#a8a8a8">=</span><span style="color:#ecc878">&quot;namedview4&quot;</span><span style="color:#a8a8a8">&gt;</span></div>
<div class="t" style="left:759px;top:289.76px;font-size:17.5px;color:#ecc878;">"</div>
<svg class="a" style="left:765px;top:283.2px;" width="18" height="14" viewBox="0 0 18 14"><path d="M12.3 0.7 H15.7 V10 L14 12 H5.5 L2.5 9 L0.8 8.5 L5.5 4.3 L5.5 7.3 L12.3 7.3Z" fill="none" stroke="#ecc878" stroke-width="1.1" stroke-linejoin="miter"/></svg>
<div class="t" style="left:804px;top:289.76px;font-size:17.5px;color:#ecc878;">"</div>
<svg class="a" style="left:742.5px;top:310px;" width="8" height="14" viewBox="0 0 8 14"><path d="M0.5 0.5 V13.5 L7 7Z" fill="#c8c8c8"/></svg>
<div class="t" style="left:760px;top:316.76px;font-size:17.5px;transform:scaleX(1.0191)"><span style="color:#a8a8a8">&lt;</span><span style="color:#6aa8f0">desc</span><span style="color:#a8a8a8"> </span><span style="color:#f07a7a">id</span><span style="color:#a8a8a8">=</span><span style="color:#ecc878">&quot;desc1&quot;</span><span style="color:#a8a8a8">&gt;</span></div>
<div class="t" style="left:759px;top:343.76px;font-size:17.5px;color:#ecc878;">"</div>
<svg class="a" style="left:765px;top:337.2px;" width="18" height="14" viewBox="0 0 18 14"><path d="M12.3 0.7 H15.7 V10 L14 12 H5.5 L2.5 9 L0.8 8.5 L5.5 4.3 L5.5 7.3 L12.3 7.3Z" fill="none" stroke="#ecc878" stroke-width="1.1" stroke-linejoin="miter"/></svg>
<div class="t" style="left:804px;top:343.76px;font-size:17.5px;color:#ecc878;">"</div>
<div class="t" style="left:760px;top:370.76px;font-size:17.5px;transform:scaleX(0.9299)"><span style="color:#a8a8a8">&lt;</span><span style="color:#6aa8f0">g</span><span style="color:#a8a8a8"> </span><span style="color:#f07a7a">id</span><span style="color:#a8a8a8">=</span><span style="color:#ecc878">&quot;_x3C_desc_x3E__1_&quot;</span><span style="color:#a8a8a8">&gt;</span></div>
<div class="t" style="left:759px;top:397.76px;font-size:17.5px;color:#ecc878;">"</div>
<svg class="a" style="left:765px;top:391.2px;" width="18" height="14" viewBox="0 0 18 14"><path d="M12.3 0.7 H15.7 V10 L14 12 H5.5 L2.5 9 L0.8 8.5 L5.5 4.3 L5.5 7.3 L12.3 7.3Z" fill="none" stroke="#ecc878" stroke-width="1.1" stroke-linejoin="miter"/></svg>
<div class="t" style="left:804px;top:397.76px;font-size:17.5px;color:#ecc878;">"</div>
<svg class="a" style="left:742.5px;top:418px;" width="8" height="14" viewBox="0 0 8 14"><path d="M0.5 0.5 V13.5 L7 7Z" fill="#ffffff"/></svg>
<div class="t" style="left:760px;top:424.76px;font-size:17.5px;transform:scaleX(1.0852)"><span style="color:#ffffff">&lt;</span><span style="color:#ffffff">g</span><span style="color:#ffffff"> </span><span style="color:#ffffff">id</span><span style="color:#ffffff">=</span><span style="color:#ffffff">&quot;g5&quot;</span><span style="color:#ffffff">&gt;</span></div>
<div class="t" style="left:759px;top:451.76px;font-size:17.5px;color:#ecc878;">"</div>
<svg class="a" style="left:765px;top:445.2px;" width="18" height="14" viewBox="0 0 18 14"><path d="M12.3 0.7 H15.7 V10 L14 12 H5.5 L2.5 9 L0.8 8.5 L5.5 4.3 L5.5 7.3 L12.3 7.3Z" fill="none" stroke="#ecc878" stroke-width="1.1" stroke-linejoin="miter"/></svg>
<div class="t" style="left:783.5px;top:451.76px;font-size:17.5px;color:#ecc878;">"</div>
<div class="a" style="left:1873px;top:266px;width:42px;height:1px;background:#2e2e2e;"></div>
<div class="a" style="left:1873px;top:344.4px;width:42px;height:1px;background:#2e2e2e;"></div>
<div class="a" style="left:1873px;top:423px;width:42px;height:1px;background:#2e2e2e;"></div>
<div class="a" style="left:1873px;top:537.6px;width:42px;height:1px;background:#2e2e2e;"></div>
<div class="a" style="left:1873px;top:688px;width:42px;height:1px;background:#2e2e2e;"></div>
<svg class="a" style="left:1887px;top:127px;" width="18" height="18" viewBox="0 0 18 18"><path d="M3 2.5 H9.5 L13 6 V15.5 H3Z" fill="none" stroke="#f0f0f0" stroke-width="1.8"/><path d="M9.5 2.5 V6 H13" fill="#f0f0f0"/><path d="M14 0 L14.9 2 L17 2.2 L15.4 3.6 L15.9 5.8 L14 4.6 L12.1 5.8 L12.6 3.6 L11 2.2 L13.1 2Z" fill="#00a000"/></svg>
<svg class="a" style="left:1887px;top:163px;" width="18" height="18" viewBox="0 0 18 18"><path d="M1.5 2 H7.5 V4.5 H14.5 V7 H4.5 L2.7 13.5 H1.5Z" fill="#eeeeee"/><path d="M4.8 8.5 H17 L15.3 16 H1.8Z" fill="#eeeeee"/></svg>
<svg class="a" style="left:1887px;top:200.6px;" width="18" height="18" viewBox="0 0 18 18"><path d="M2 10 H5 L6 12 H12 L13 10 H16 V16 H2Z" fill="#f0f0f0"/><path d="M2 10 L4 7 M16 10 L14 7" stroke="#f0f0f0" stroke-width="1.2"/><path d="M9 1 V8" stroke="#00a000" stroke-width="2"/><path d="M6 5.5 L9 9 L12 5.5Z" fill="#00a000"/></svg>
<svg class="a" style="left:1887px;top:236.7px;" width="18" height="18" viewBox="0 0 18 18"><rect x="5" y="2" width="8" height="4" fill="#f0f0f0"/><rect x="2" y="6.5" width="14" height="6" rx="1" fill="#f0f0f0"/><rect x="5" y="11" width="8" height="5" fill="#f0f0f0"/><rect x="5" y="10" width="8" height="1" fill="#333"/></svg>
<svg class="a" style="left:1887px;top:276.8px;" width="18" height="18" viewBox="0 0 18 18"><path d="M7 2.5 H11.5 L15 6 V15.5 H5 V12" fill="none" stroke="#f0f0f0" stroke-width="1.8"/><path d="M5 6 V8" stroke="#f0f0f0" stroke-width="1.8"/><path d="M1 10 H9" stroke="#00a000" stroke-width="2"/><path d="M7.5 7 L11 10 L7.5 13Z" fill="#00a000"/></svg>
<svg class="a" style="left:1887px;top:313.5px;" width="18" height="18" viewBox="0 0 18 18"><path d="M13 8 V6 L9.5 2.5 H3 V15.5 H13 V12.5" fill="none" stroke="#f0f0f0" stroke-width="1.8"/><path d="M8 10 H15" stroke="#00a000" stroke-width="2"/><path d="M14 7 L17.5 10 L14 13Z" fill="#00a000"/></svg>
<svg class="a" style="left:1887px;top:354px;" width="18" height="18" viewBox="0 0 18 18"><path d="M5 6 H11 Q15 6 15 10 Q15 14 11 14 H9" stroke="#f0f0f0" stroke-width="1.8" fill="none"/><path d="M6.5 2.5 L2.5 6 L6.5 9.5" stroke="#f0f0f0" stroke-width="1.8" fill="none"/></svg>
<svg class="a" style="left:1887px;top:391px;" width="18" height="18" viewBox="0 0 18 18"><path d="M13 6 H7 Q3 6 3 10 Q3 14 7 14 H9" stroke="#8a8a8a" stroke-width="1.8" fill="none"/><path d="M11.5 2.5 L15.5 6 L11.5 9.5" stroke="#8a8a8a" stroke-width="1.8" fill="none"/></svg>
<svg class="a" style="left:1887px;top:434px;" width="18" height="18" viewBox="0 0 18 18"><rect x="2" y="2" width="10" height="10" fill="#f0f0f0"/><rect x="6" y="6" width="10" height="10" fill="#f0f0f0" stroke="#333" stroke-width="1"/></svg>
<svg class="a" style="left:1887px;top:471.5px;" width="18" height="18" viewBox="0 0 18 18"><circle cx="4.5" cy="13.5" r="2.5" fill="none" stroke="#f0f0f0" stroke-width="1.6"/><circle cx="13.5" cy="13.5" r="2.5" fill="none" stroke="#f0f0f0" stroke-width="1.6"/><path d="M5.5 11.5 L12 1 M12.5 11.5 L6 1" stroke="#f0f0f0" stroke-width="1.6"/></svg>
<svg class="a" style="left:1887px;top:508px;" width="18" height="18" viewBox="0 0 18 18"><rect x="3" y="3.5" width="12" height="13" rx="1" fill="none" stroke="#f0f0f0" stroke-width="1.6"/><rect x="6" y="1.5" width="6" height="3" fill="#f0f0f0"/><rect x="5.5" y="6" width="7" height="9" fill="#f0f0f0"/></svg>
<svg class="a" style="left:1887px;top:548px;" width="18" height="18" viewBox="0 0 18 18"><circle cx="8" cy="8" r="6.8" fill="#f0f0f0"/><path d="M12.5 12.5 L16.5 16.5" stroke="#f0f0f0" stroke-width="2.5"/><rect x="4.5" y="4.5" width="7" height="7" fill="none" stroke="#333" stroke-width="1" stroke-dasharray="1 1"/></svg>
<svg class="a" style="left:1887px;top:585.7px;" width="18" height="18" viewBox="0 0 18 18"><circle cx="8" cy="8" r="6.8" fill="#f0f0f0"/><path d="M12.5 12.5 L16.5 16.5" stroke="#f0f0f0" stroke-width="2.5"/><path d="M4.5 9 Q4.5 4.5 9 4.5 L11 4.5" stroke="#333" stroke-width="1.5" fill="none"/><rect x="7" y="7" width="5" height="5" fill="none" stroke="#333" stroke-width="1.3"/></svg>
<svg class="a" style="left:1887px;top:622px;" width="18" height="18" viewBox="0 0 18 18"><circle cx="8" cy="8" r="6.8" fill="#f0f0f0"/><path d="M12.5 12.5 L16.5 16.5" stroke="#f0f0f0" stroke-width="2.5"/><rect x="5.5" y="3.5" width="5" height="9" fill="none" stroke="#333" stroke-width="1.4"/></svg>
<svg class="a" style="left:1887px;top:658.8px;" width="18" height="18" viewBox="0 0 18 18"><path d="M1.5 4 V1.5 H4 M14 1.5 H16.5 V4 M16.5 14 V16.5 H14 M4 16.5 H1.5 V14" stroke="#f0f0f0" stroke-width="1" fill="none"/><rect x="3.5" y="3.5" width="11" height="11" fill="none" stroke="#f0f0f0" stroke-width="1.3"/><path d="M9 6 V12 M6 9 H12" stroke="#f0f0f0" stroke-width="1.4"/></svg>
<div class="a" style="left:1878.5px;top:693px;width:34.5px;height:33px;background:#2e2e2e;border:1px solid #1a1a1a;border-radius:6px;box-sizing:border-box"></div>
<svg class="a" style="left:1889px;top:705px;" width="14" height="8" viewBox="0 0 14 8"><path d="M0.5 0.5 H13.5 L7 7Z" fill="#f0f0f0"/></svg>
<div class="a" style="left:0px;top:913px;width:1919px;height:93px;background:#333333;"></div>
<div class="a" style="left:137px;top:923px;width:21px;height:16px;background:#1a1a1a;box-shadow:inset 0 0 0 1px rgba(0,0,0,0.12)"></div><div class="a" style="left:137px;top:940px;width:21px;height:16px;background:#d4aa00;box-shadow:inset 0 0 0 1px rgba(0,0,0,0.12)"></div><div class="a" style="left:159px;top:923px;width:21px;height:16px;background:#333333;box-shadow:inset 0 0 0 1px rgba(0,0,0,0.12)"></div><div class="a" style="left:159px;top:940px;width:21px;height:16px;background:#ffcc00;box-shadow:inset 0 0 0 1px rgba(0,0,0,0.12)"></div><div class="a" style="left:181px;top:923px;width:21px;height:16px;background:#4d4d4d;box-shadow:inset 0 0 0 1px rgba(0,0,0,0.12)"></div><div class="a" style="left:181px;top:940px;width:21px;height:16px;background:#ffd42a;box-shadow:inset 0 0 0 1px rgba(0,0,0,0.12)"></div><div class="a" style="left:203px;top:923px;width:21px;height:16px;background:#666666;box-shadow:inset 0 0 0 1px rgba(0,0,0,0.12)"></div><div class="a" style="left:203px;top:940px;width:21px;height:16px;background:#ffdd55;box-shadow:inset 0 0 0 1px rgba(0,0,0,0.12)"></div><div class="a" style="left:225px;top:923px;width:21px;height:16px;background:#999999;box-shadow:inset 0 0 0 1px rgba(0,0,0,0.12)"></div><div class="a" style="left:225px;top:940px;width:21px;height:16px;background:#ffe680;box-shadow:inset 0 0 0 1px rgba(0,0,0,0.12)"></div><div class="a" style="left:247px;top:923px;width:21px;height:16px;background:#b3b3b3;box-shadow:inset 0 0 0 1px rgba(0,0,0,0.12)"></div><div class="a" style="left:247px;top:940px;width:21px;height:16px;background:#ffeeaa;box-shadow:inset 0 0 0 1px rgba(0,0,0,0.12)"></div><div class="a" style="left:269px;top:923px;width:21px;height:16px;background:#cccccc;box-shadow:inset 0 0 0 1px rgba(0,0,0,0.12)"></div><div class="a" style="left:269px;top:940px;width:21px;height:16px;background:#fff6d5;box-shadow:inset 0 0 0 1px rgba(0,0,0,0.12)"></div><div class="a" style="left:291px;top:923px;width:21px;height:16px;background:#e6e6e6;box-shadow:inset 0 0 0 1px rgba(0,0,0,0.12)"></div><div class="a" style="left:291px;top:940px;width:21px;height:16px;background:#28220b;box-shadow:inset 0 0 0 1px rgba(0,0,0,0.12)"></div><div class="a" style="left:313px;top:923px;width:21px;height:16px;background:#ececec;box-shadow:inset 0 0 0 1px rgba(0,0,0,0.12)"></div><div class="a" style="left:313px;top:940px;width:21px;height:16px;background:#504416;box-shadow:inset 0 0 0 1px rgba(0,0,0,0.12)"></div><div class="a" style="left:335px;top:923px;width:21px;height:16px;background:#f2f2f2;box-shadow:inset 0 0 0 1px rgba(0,0,0,0.12)"></div><div class="a" style="left:335px;top:940px;width:21px;height:16px;background:#786721;box-shadow:inset 0 0 0 1px rgba(0,0,0,0.12)"></div><div class="a" style="left:357px;top:923px;width:21px;height:16px;background:#f9f9f9;box-shadow:inset 0 0 0 1px rgba(0,0,0,0.12)"></div><div class="a" style="left:357px;top:940px;width:21px;height:16px;background:#a0892c;box-shadow:inset 0 0 0 1px rgba(0,0,0,0.12)"></div><div class="a" style="left:379px;top:923px;width:21px;height:16px;background:#800000;box-shadow:inset 0 0 0 1px rgba(0,0,0,0.12)"></div><div class="a" style="left:379px;top:940px;width:21px;height:16px;background:#c8ab37;box-shadow:inset 0 0 0 1px rgba(0,0,0,0.12)"></div><div class="a" style="left:401px;top:923px;width:21px;height:16px;background:#ff0000;box-shadow:inset 0 0 0 1px rgba(0,0,0,0.12)"></div><div class="a" style="left:401px;top:940px;width:21px;height:16px;background:#d3bc5f;box-shadow:inset 0 0 0 1px rgba(0,0,0,0.12)"></div><div class="a" style="left:423px;top:923px;width:21px;height:16px;background:#808000;box-shadow:inset 0 0 0 1px rgba(0,0,0,0.12)"></div><div class="a" style="left:423px;top:940px;width:21px;height:16px;background:#decd87;box-shadow:inset 0 0 0 1px rgba(0,0,0,0.12)"></div><div class="a" style="left:445px;top:923px;width:21px;height:16px;background:#ffff00;box-shadow:inset 0 0 0 1px rgba(0,0,0,0.12)"></div><div class="a" style="left:445px;top:940px;width:21px;height:16px;background:#e9ddaf;box-shadow:inset 0 0 0 1px rgba(0,0,0,0.12)"></div><div class="a" style="left:467px;top:923px;width:21px;height:16px;background:#008000;box-shadow:inset 0 0 0 1px rgba(0,0,0,0.12)"></div><div class="a" style="left:467px;top:940px;width:21px;height:16px;background:#f4eed7;box-shadow:inset 0 0 0 1px rgba(0,0,0,0.12)"></div><div class="a" style="left:489px;top:923px;width:20px;height:16px;background:#00ff00;box-shadow:inset 0 0 0 1px rgba(0,0,0,0.12)"></div><div class="a" style="left:489px;top:940px;width:20px;height:16px;background:#24221c;box-shadow:inset 0 0 0 1px rgba(0,0,0,0.12)"></div><div class="a" style="left:510px;top:923px;width:20px;height:16px;background:#008080;box-shadow:inset 0 0 0 1px rgba(0,0,0,0.12)"></div><div class="a" style="left:510px;top:940px;width:20px;height:16px;background:#484537;box-shadow:inset 0 0 0 1px rgba(0,0,0,0.12)"></div><div class="a" style="left:531px;top:923px;width:20px;height:16px;background:#00ffff;box-shadow:inset 0 0 0 1px rgba(0,0,0,0.12)"></div><div class="a" style="left:531px;top:940px;width:20px;height:16px;background:#6c6753;box-shadow:inset 0 0 0 1px rgba(0,0,0,0.12)"></div><div class="a" style="left:552px;top:923px;width:20px;height:16px;background:#000080;box-shadow:inset 0 0 0 1px rgba(0,0,0,0.12)"></div><div class="a" style="left:552px;top:940px;width:20px;height:16px;background:#918a6f;box-shadow:inset 0 0 0 1px rgba(0,0,0,0.12)"></div><div class="a" style="left:573px;top:923px;width:20px;height:16px;background:#0000ff;box-shadow:inset 0 0 0 1px rgba(0,0,0,0.12)"></div><div class="a" style="left:573px;top:940px;width:20px;height:16px;background:#aca793;box-shadow:inset 0 0 0 1px rgba(0,0,0,0.12)"></div><div class="a" style="left:594px;top:923px;width:20px;height:16px;background:#800080;box-shadow:inset 0 0 0 1px rgba(0,0,0,0.12)"></div><div class="a" style="left:594px;top:940px;width:20px;height:16px;background:#c8c4b7;box-shadow:inset 0 0 0 1px rgba(0,0,0,0.12)"></div><div class="a" style="left:615px;top:923px;width:20px;height:16px;background:#ff00ff;box-shadow:inset 0 0 0 1px rgba(0,0,0,0.12)"></div><div class="a" style="left:615px;top:940px;width:20px;height:16px;background:#e3e2db;box-shadow:inset 0 0 0 1px rgba(0,0,0,0.12)"></div><div class="a" style="left:636px;top:923px;width:20px;height:16px;background:#2b0000;box-shadow:inset 0 0 0 1px rgba(0,0,0,0.12)"></div><div class="a" style="left:636px;top:940px;width:20px;height:16px;background:#222b00;box-shadow:inset 0 0 0 1px rgba(0,0,0,0.12)"></div><div class="a" style="left:657px;top:923px;width:20px;height:16px;background:#550000;box-shadow:inset 0 0 0 1px rgba(0,0,0,0.12)"></div><div class="a" style="left:657px;top:940px;width:20px;height:16px;background:#445500;box-shadow:inset 0 0 0 1px rgba(0,0,0,0.12)"></div><div class="a" style="left:678px;top:923px;width:20px;height:16px;background:#800000;box-shadow:inset 0 0 0 1px rgba(0,0,0,0.12)"></div><div class="a" style="left:678px;top:940px;width:20px;height:16px;background:#668000;box-shadow:inset 0 0 0 1px rgba(0,0,0,0.12)"></div><div class="a" style="left:699px;top:923px;width:20px;height:16px;background:#aa0000;box-shadow:inset 0 0 0 1px rgba(0,0,0,0.12)"></div><div class="a" style="left:699px;top:940px;width:20px;height:16px;background:#88aa00;box-shadow:inset 0 0 0 1px rgba(0,0,0,0.12)"></div><div class="a" style="left:720px;top:923px;width:20px;height:16px;background:#d40000;box-shadow:inset 0 0 0 1px rgba(0,0,0,0.12)"></div><div class="a" style="left:720px;top:940px;width:20px;height:16px;background:#aad400;box-shadow:inset 0 0 0 1px rgba(0,0,0,0.12)"></div><div class="a" style="left:741px;top:923px;width:20px;height:16px;background:#ff0000;box-shadow:inset 0 0 0 1px rgba(0,0,0,0.12)"></div><div class="a" style="left:741px;top:940px;width:20px;height:16px;background:#ccff00;box-shadow:inset 0 0 0 1px rgba(0,0,0,0.12)"></div><div class="a" style="left:762px;top:923px;width:20px;height:16px;background:#ff2a2a;box-shadow:inset 0 0 0 1px rgba(0,0,0,0.12)"></div><div class="a" style="left:762px;top:940px;width:20px;height:16px;background:#d4ff2a;box-shadow:inset 0 0 0 1px rgba(0,0,0,0.12)"></div><div class="a" style="left:783px;top:923px;width:20px;height:16px;background:#ff5555;box-shadow:inset 0 0 0 1px rgba(0,0,0,0.12)"></div><div class="a" style="left:783px;top:940px;width:20px;height:16px;background:#ddff55;box-shadow:inset 0 0 0 1px rgba(0,0,0,0.12)"></div><div class="a" style="left:804px;top:923px;width:20px;height:16px;background:#ff8080;box-shadow:inset 0 0 0 1px rgba(0,0,0,0.12)"></div><div class="a" style="left:804px;top:940px;width:20px;height:16px;background:#e5ff80;box-shadow:inset 0 0 0 1px rgba(0,0,0,0.12)"></div><div class="a" style="left:825px;top:923px;width:20px;height:16px;background:#ffaaaa;box-shadow:inset 0 0 0 1px rgba(0,0,0,0.12)"></div><div class="a" style="left:825px;top:940px;width:20px;height:16px;background:#eeffaa;box-shadow:inset 0 0 0 1px rgba(0,0,0,0.12)"></div><div class="a" style="left:846px;top:923px;width:20px;height:16px;background:#ffd5d5;box-shadow:inset 0 0 0 1px rgba(0,0,0,0.12)"></div><div class="a" style="left:846px;top:940px;width:20px;height:16px;background:#f6ffd5;box-shadow:inset 0 0 0 1px rgba(0,0,0,0.12)"></div><div class="a" style="left:867px;top:923px;width:20px;height:16px;background:#280b0b;box-shadow:inset 0 0 0 1px rgba(0,0,0,0.12)"></div><div class="a" style="left:867px;top:940px;width:20px;height:16px;background:#22280b;box-shadow:inset 0 0 0 1px rgba(0,0,0,0.12)"></div><div class="a" style="left:888px;top:923px;width:20px;height:16px;background:#501616;box-shadow:inset 0 0 0 1px rgba(0,0,0,0.12)"></div><div class="a" style="left:888px;top:940px;width:20px;height:16px;background:#445016;box-shadow:inset 0 0 0 1px rgba(0,0,0,0.12)"></div><div class="a" style="left:909px;top:923px;width:20px;height:16px;background:#782121;box-shadow:inset 0 0 0 1px rgba(0,0,0,0.12)"></div><div class="a" style="left:909px;top:940px;width:20px;height:16px;background:#677821;box-shadow:inset 0 0 0 1px rgba(0,0,0,0.12)"></div><div class="a" style="left:930px;top:923px;width:20px;height:16px;background:#a02c2c;box-shadow:inset 0 0 0 1px rgba(0,0,0,0.12)"></div><div class="a" style="left:930px;top:940px;width:20px;height:16px;background:#89a02c;box-shadow:inset 0 0 0 1px rgba(0,0,0,0.12)"></div><div class="a" style="left:951px;top:923px;width:20px;height:16px;background:#c83737;box-shadow:inset 0 0 0 1px rgba(0,0,0,0.12)"></div><div class="a" style="left:951px;top:940px;width:20px;height:16px;background:#abc837;box-shadow:inset 0 0 0 1px rgba(0,0,0,0.12)"></div><div class="a" style="left:972px;top:923px;width:20px;height:16px;background:#d35f5f;box-shadow:inset 0 0 0 1px rgba(0,0,0,0.12)"></div><div class="a" style="left:972px;top:940px;width:20px;height:16px;background:#bcd35f;box-shadow:inset 0 0 0 1px rgba(0,0,0,0.12)"></div><div class="a" style="left:993px;top:923px;width:20px;height:16px;background:#de8787;box-shadow:inset 0 0 0 1px rgba(0,0,0,0.12)"></div><div class="a" style="left:993px;top:940px;width:20px;height:16px;background:#cdde87;box-shadow:inset 0 0 0 1px rgba(0,0,0,0.12)"></div><div class="a" style="left:1014px;top:923px;width:20px;height:16px;background:#e9afaf;box-shadow:inset 0 0 0 1px rgba(0,0,0,0.12)"></div><div class="a" style="left:1014px;top:940px;width:20px;height:16px;background:#dde9af;box-shadow:inset 0 0 0 1px rgba(0,0,0,0.12)"></div><div class="a" style="left:1035px;top:923px;width:20px;height:16px;background:#f4d7d7;box-shadow:inset 0 0 0 1px rgba(0,0,0,0.12)"></div><div class="a" style="left:1035px;top:940px;width:20px;height:16px;background:#eef4d7;box-shadow:inset 0 0 0 1px rgba(0,0,0,0.12)"></div><div class="a" style="left:1056px;top:923px;width:20px;height:16px;background:#241c1c;box-shadow:inset 0 0 0 1px rgba(0,0,0,0.12)"></div><div class="a" style="left:1056px;top:940px;width:20px;height:16px;background:#22241c;box-shadow:inset 0 0 0 1px rgba(0,0,0,0.12)"></div><div class="a" style="left:1077px;top:923px;width:20px;height:16px;background:#483737;box-shadow:inset 0 0 0 1px rgba(0,0,0,0.12)"></div><div class="a" style="left:1077px;top:940px;width:20px;height:16px;background:#454837;box-shadow:inset 0 0 0 1px rgba(0,0,0,0.12)"></div><div class="a" style="left:1098px;top:923px;width:20px;height:16px;background:#6c5353;box-shadow:inset 0 0 0 1px rgba(0,0,0,0.12)"></div><div class="a" style="left:1098px;top:940px;width:20px;height:16px;background:#676c53;box-shadow:inset 0 0 0 1px rgba(0,0,0,0.12)"></div><div class="a" style="left:1119px;top:923px;width:20px;height:16px;background:#916f6f;box-shadow:inset 0 0 0 1px rgba(0,0,0,0.12)"></div><div class="a" style="left:1119px;top:940px;width:20px;height:16px;background:#8a916f;box-shadow:inset 0 0 0 1px rgba(0,0,0,0.12)"></div><div class="a" style="left:1140px;top:923px;width:20px;height:16px;background:#ac9393;box-shadow:inset 0 0 0 1px rgba(0,0,0,0.12)"></div><div class="a" style="left:1140px;top:940px;width:20px;height:16px;background:#a7ac93;box-shadow:inset 0 0 0 1px rgba(0,0,0,0.12)"></div><div class="a" style="left:1161px;top:923px;width:20px;height:16px;background:#c8b7b7;box-shadow:inset 0 0 0 1px rgba(0,0,0,0.12)"></div><div class="a" style="left:1161px;top:940px;width:20px;height:16px;background:#c4c8b7;box-shadow:inset 0 0 0 1px rgba(0,0,0,0.12)"></div><div class="a" style="left:1182px;top:923px;width:20px;height:16px;background:#e3dbdb;box-shadow:inset 0 0 0 1px rgba(0,0,0,0.12)"></div><div class="a" style="left:1182px;top:940px;width:20px;height:16px;background:#e2e3db;box-shadow:inset 0 0 0 1px rgba(0,0,0,0.12)"></div><div class="a" style="left:1203px;top:923px;width:20px;height:16px;background:#2b1100;box-shadow:inset 0 0 0 1px rgba(0,0,0,0.12)"></div><div class="a" style="left:1203px;top:940px;width:20px;height:16px;background:#112b00;box-shadow:inset 0 0 0 1px rgba(0,0,0,0.12)"></div><div class="a" style="left:1224px;top:923px;width:20px;height:16px;background:#552200;box-shadow:inset 0 0 0 1px rgba(0,0,0,0.12)"></div><div class="a" style="left:1224px;top:940px;width:20px;height:16px;background:#225500;box-shadow:inset 0 0 0 1px rgba(0,0,0,0.12)"></div><div class="a" style="left:1245px;top:923px;width:20px;height:16px;background:#803300;box-shadow:inset 0 0 0 1px rgba(0,0,0,0.12)"></div><div class="a" style="left:1245px;top:940px;width:20px;height:16px;background:#338000;box-shadow:inset 0 0 0 1px rgba(0,0,0,0.12)"></div><div class="a" style="left:1266px;top:923px;width:20px;height:16px;background:#aa4400;box-shadow:inset 0 0 0 1px rgba(0,0,0,0.12)"></div><div class="a" style="left:1266px;top:940px;width:20px;height:16px;background:#44aa00;box-shadow:inset 0 0 0 1px rgba(0,0,0,0.12)"></div><div class="a" style="left:1287px;top:923px;width:20px;height:16px;background:#d45500;box-shadow:inset 0 0 0 1px rgba(0,0,0,0.12)"></div><div class="a" style="left:1287px;top:940px;width:20px;height:16px;background:#55d400;box-shadow:inset 0 0 0 1px rgba(0,0,0,0.12)"></div><div class="a" style="left:1308px;top:923px;width:20px;height:16px;background:#ff6600;box-shadow:inset 0 0 0 1px rgba(0,0,0,0.12)"></div><div class="a" style="left:1308px;top:940px;width:20px;height:16px;background:#66ff00;box-shadow:inset 0 0 0 1px rgba(0,0,0,0.12)"></div><div class="a" style="left:1329px;top:923px;width:20px;height:16px;background:#ff7f2a;box-shadow:inset 0 0 0 1px rgba(0,0,0,0.12)"></div><div class="a" style="left:1329px;top:940px;width:20px;height:16px;background:#7fff2a;box-shadow:inset 0 0 0 1px rgba(0,0,0,0.12)"></div><div class="a" style="left:1350px;top:923px;width:20px;height:16px;background:#ff9955;box-shadow:inset 0 0 0 1px rgba(0,0,0,0.12)"></div><div class="a" style="left:1350px;top:940px;width:20px;height:16px;background:#99ff55;box-shadow:inset 0 0 0 1px rgba(0,0,0,0.12)"></div><div class="a" style="left:1371px;top:923px;width:20px;height:16px;background:#ffb380;box-shadow:inset 0 0 0 1px rgba(0,0,0,0.12)"></div><div class="a" style="left:1371px;top:940px;width:20px;height:16px;background:#b3ff80;box-shadow:inset 0 0 0 1px rgba(0,0,0,0.12)"></div><div class="a" style="left:1392px;top:923px;width:20px;height:16px;background:#ffccaa;box-shadow:inset 0 0 0 1px rgba(0,0,0,0.12)"></div><div class="a" style="left:1392px;top:940px;width:20px;height:16px;background:#ccffaa;box-shadow:inset 0 0 0 1px rgba(0,0,0,0.12)"></div><div class="a" style="left:1413px;top:923px;width:20px;height:16px;background:#ffe6d5;box-shadow:inset 0 0 0 1px rgba(0,0,0,0.12)"></div><div class="a" style="left:1413px;top:940px;width:20px;height:16px;background:#e5ffd5;box-shadow:inset 0 0 0 1px rgba(0,0,0,0.12)"></div><div class="a" style="left:1434px;top:923px;width:20px;height:16px;background:#28170b;box-shadow:inset 0 0 0 1px rgba(0,0,0,0.12)"></div><div class="a" style="left:1434px;top:940px;width:20px;height:16px;background:#17280b;box-shadow:inset 0 0 0 1px rgba(0,0,0,0.12)"></div><div class="a" style="left:1455px;top:923px;width:20px;height:16px;background:#502d16;box-shadow:inset 0 0 0 1px rgba(0,0,0,0.12)"></div><div class="a" style="left:1455px;top:940px;width:20px;height:16px;background:#2d5016;box-shadow:inset 0 0 0 1px rgba(0,0,0,0.12)"></div><div class="a" style="left:1476px;top:923px;width:20px;height:16px;background:#784421;box-shadow:inset 0 0 0 1px rgba(0,0,0,0.12)"></div><div class="a" style="left:1476px;top:940px;width:20px;height:16px;background:#447821;box-shadow:inset 0 0 0 1px rgba(0,0,0,0.12)"></div><div class="a" style="left:1497px;top:923px;width:20px;height:16px;background:#a05a2c;box-shadow:inset 0 0 0 1px rgba(0,0,0,0.12)"></div><div class="a" style="left:1497px;top:940px;width:20px;height:16px;background:#5aa02c;box-shadow:inset 0 0 0 1px rgba(0,0,0,0.12)"></div><div class="a" style="left:1518px;top:923px;width:20px;height:16px;background:#c87137;box-shadow:inset 0 0 0 1px rgba(0,0,0,0.12)"></div><div class="a" style="left:1518px;top:940px;width:20px;height:16px;background:#71c837;box-shadow:inset 0 0 0 1px rgba(0,0,0,0.12)"></div><div class="a" style="left:1539px;top:923px;width:20px;height:16px;background:#d38d5f;box-shadow:inset 0 0 0 1px rgba(0,0,0,0.12)"></div><div class="a" style="left:1539px;top:940px;width:20px;height:16px;background:#8dd35f;box-shadow:inset 0 0 0 1px rgba(0,0,0,0.12)"></div><div class="a" style="left:1560px;top:923px;width:20px;height:16px;background:#deaa87;box-shadow:inset 0 0 0 1px rgba(0,0,0,0.12)"></div><div class="a" style="left:1560px;top:940px;width:20px;height:16px;background:#aade87;box-shadow:inset 0 0 0 1px rgba(0,0,0,0.12)"></div><div class="a" style="left:1581px;top:923px;width:20px;height:16px;background:#e9c6af;box-shadow:inset 0 0 0 1px rgba(0,0,0,0.12)"></div><div class="a" style="left:1581px;top:940px;width:20px;height:16px;background:#c6e9af;box-shadow:inset 0 0 0 1px rgba(0,0,0,0.12)"></div><div class="a" style="left:1602px;top:923px;width:20px;height:16px;background:#f4e3d7;box-shadow:inset 0 0 0 1px rgba(0,0,0,0.12)"></div><div class="a" style="left:1602px;top:940px;width:20px;height:16px;background:#e3f4d7;box-shadow:inset 0 0 0 1px rgba(0,0,0,0.12)"></div><div class="a" style="left:1623px;top:923px;width:20px;height:16px;background:#241f1c;box-shadow:inset 0 0 0 1px rgba(0,0,0,0.12)"></div><div class="a" style="left:1623px;top:940px;width:20px;height:16px;background:#1f241c;box-shadow:inset 0 0 0 1px rgba(0,0,0,0.12)"></div><div class="a" style="left:1644px;top:923px;width:20px;height:16px;background:#483e37;box-shadow:inset 0 0 0 1px rgba(0,0,0,0.12)"></div><div class="a" style="left:1644px;top:940px;width:20px;height:16px;background:#3e4837;box-shadow:inset 0 0 0 1px rgba(0,0,0,0.12)"></div><div class="a" style="left:1665px;top:923px;width:20px;height:16px;background:#6c5d53;box-shadow:inset 0 0 0 1px rgba(0,0,0,0.12)"></div><div class="a" style="left:1665px;top:940px;width:20px;height:16px;background:#5d6c53;box-shadow:inset 0 0 0 1px rgba(0,0,0,0.12)"></div><div class="a" style="left:1686px;top:923px;width:20px;height:16px;background:#917c6f;box-shadow:inset 0 0 0 1px rgba(0,0,0,0.12)"></div><div class="a" style="left:1686px;top:940px;width:20px;height:16px;background:#7c916f;box-shadow:inset 0 0 0 1px rgba(0,0,0,0.12)"></div><div class="a" style="left:1707px;top:923px;width:20px;height:16px;background:#ac9d93;box-shadow:inset 0 0 0 1px rgba(0,0,0,0.12)"></div><div class="a" style="left:1707px;top:940px;width:20px;height:16px;background:#9dac93;box-shadow:inset 0 0 0 1px rgba(0,0,0,0.12)"></div><div class="a" style="left:1728px;top:923px;width:20px;height:16px;background:#c8beb7;box-shadow:inset 0 0 0 1px rgba(0,0,0,0.12)"></div><div class="a" style="left:1728px;top:940px;width:20px;height:16px;background:#bec8b7;box-shadow:inset 0 0 0 1px rgba(0,0,0,0.12)"></div><div class="a" style="left:1749px;top:923px;width:20px;height:16px;background:#e3dedb;box-shadow:inset 0 0 0 1px rgba(0,0,0,0.12)"></div><div class="a" style="left:1749px;top:940px;width:20px;height:16px;background:#dee3db;box-shadow:inset 0 0 0 1px rgba(0,0,0,0.12)"></div><div class="a" style="left:1770px;top:923px;width:20px;height:16px;background:#2b2200;box-shadow:inset 0 0 0 1px rgba(0,0,0,0.12)"></div><div class="a" style="left:1770px;top:940px;width:20px;height:16px;background:#002b00;box-shadow:inset 0 0 0 1px rgba(0,0,0,0.12)"></div><div class="a" style="left:1791px;top:923px;width:20px;height:16px;background:#554400;box-shadow:inset 0 0 0 1px rgba(0,0,0,0.12)"></div><div class="a" style="left:1791px;top:940px;width:20px;height:16px;background:#005500;box-shadow:inset 0 0 0 1px rgba(0,0,0,0.12)"></div><div class="a" style="left:1812px;top:923px;width:20px;height:16px;background:#806600;box-shadow:inset 0 0 0 1px rgba(0,0,0,0.12)"></div><div class="a" style="left:1812px;top:940px;width:20px;height:16px;background:#008000;box-shadow:inset 0 0 0 1px rgba(0,0,0,0.12)"></div><div class="a" style="left:1833px;top:923px;width:20px;height:16px;background:#aa8800;box-shadow:inset 0 0 0 1px rgba(0,0,0,0.12)"></div><div class="a" style="left:1833px;top:940px;width:20px;height:16px;background:#00aa00;box-shadow:inset 0 0 0 1px rgba(0,0,0,0.12)"></div>
<svg class="a" style="left:1px;top:923px;" width="33" height="33" viewBox="0 0 33 33"><rect x="0" y="0" width="33" height="33" fill="#fff"/><path d="M4 4 L29 29 M29 4 L4 29" stroke="#d4213d" stroke-width="2.6" stroke-linecap="round"/></svg>
<div class="a" style="left:35px;top:923px;width:33px;height:33px;background:#000000;"></div>
<div class="a" style="left:69px;top:923px;width:33px;height:33px;background:#808080;"></div>
<div class="a" style="left:103px;top:923px;width:33px;height:33px;background:#ffffff;"></div>
<svg class="a" style="left:1857px;top:934px;" width="14" height="10" viewBox="0 0 14 10"><path d="M1.5 8.5 L7 3 L12.5 8.5" stroke="#8a8a8a" stroke-width="1.8" fill="none"/></svg>
<svg class="a" style="left:1880px;top:932px;" width="14" height="10" viewBox="0 0 14 10"><path d="M1.5 1.5 L7 7 L12.5 1.5" stroke="#f0f0f0" stroke-width="1.8" fill="none"/></svg>
<svg class="a" style="left:1901px;top:936px;" width="16" height="14" viewBox="0 0 16 14"><path d="M1 2 H15 M1 7 H15 M1 12 H15" stroke="#f0f0f0" stroke-width="2"/></svg>
<div class="t" style="left:30px;top:971.79px;font-size:18px;color:#e6e6e6;transform:scaleX(0.8216);">Fill:</div>
<div class="t" style="left:0px;top:996.29px;font-size:18px;color:#e6e6e6;transform:scaleX(0.9294);">Stroke:</div>
<div class="t" style="left:75px;top:971.79px;font-size:18px;color:#ffffff;font-weight:bold;transform:scaleX(0.9598);">Unset</div>
<div class="t" style="left:75px;top:996.29px;font-size:18px;color:#ffffff;font-weight:bold;transform:scaleX(0.9598);">Unset</div>
<div class="t" style="left:133px;top:996.29px;font-size:18px;color:#e6e6e6;transform:scaleX(0.9683);">0.00100</div>
<div class="t" style="left:201.4px;top:983.79px;font-size:18px;color:#e6e6e6;transform:scaleX(0.9210);">O:</div>
<div class="a" style="left:223.6px;top:958.5px;width:73.9px;height:53.5px;background:#2b2b2b;border:1px solid #1d1d1d;border-radius:5px;box-sizing:border-box"></div>
<div class="a" style="left:263.5px;top:959.5px;width:1px;height:51.5px;background:#282828;"></div>
<div class="a" style="left:280.0px;top:959.5px;width:1px;height:51.5px;background:#282828;"></div>
<div class="a" style="left:266px;top:982px;width:12px;height:2px;background:#e6e6e6;"></div>
<div class="a" style="left:282px;top:982px;width:12px;height:2px;background:#777777;"></div>
<div class="a" style="left:288px;top:977px;width:2px;height:12px;background:#777777;"></div>
<div class="t" style="left:234px;top:983.79px;font-size:18px;color:#e6e6e6;transform:scaleX(0.9523);">100</div>
<div class="a" style="left:308.7px;top:970px;width:4px;height:24.7px;background:#f0f0f0;"></div>
<div class="t" style="left:318px;top:983.79px;font-size:18px;color:#e6e6e6;font-style:italic;transform:scaleX(1.0239);">[root]</div>
<svg class="a" style="left:380px;top:975px;" width="16" height="14" viewBox="0 0 16 14"><path d="M1 8 Q8 1 15 8 Q8 15 1 8Z" fill="none" stroke="#8a8a8a" stroke-width="1.6"/><circle cx="8" cy="8" r="2.5" fill="#8a8a8a"/><path d="M3 4 L2 2 M8 3 V1 M13 4 L14 2" stroke="#8a8a8a" stroke-width="1.3"/></svg>
<svg class="a" style="left:417px;top:973px;" width="17" height="18" viewBox="0 0 17 18"><path d="M8.5 8 V5.5 Q8.5 2 12 2 Q15.5 2 15.5 5.5 V7" stroke="#8a8a8a" stroke-width="1.8" fill="none"/><rect x="1" y="8" width="11" height="9" fill="#8a8a8a"/></svg>
<div class="a" style="left:443.8px;top:964px;width:1px;height:38px;background:#2b2b2b;"></div>
<div class="t" style="left:450.2px;top:983.8px;font-size:18px;color:#e6e6e6;transform:scaleX(0.9976)"><b style="color:#fff">Group</b> of <b style="color:#fff">9</b> objects in root. Click selection again to toggle scale/rotation handles.</div>
<div class="a" style="left:1550.7px;top:962px;width:1px;height:44px;background:#2b2b2b;"></div>
<div class="t" style="left:1556.7px;top:972.09px;font-size:18px;color:#e6e6e6;transform:scaleX(0.8820);">X:</div>
<div class="t" style="left:1597px;top:972.09px;font-size:18px;color:#e6e6e6;transform:scaleX(0.9420);">0.45</div>
<div class="t" style="left:1556.7px;top:996.79px;font-size:18px;color:#e6e6e6;transform:scaleX(0.8742);">Y:</div>
<div class="t" style="left:1597px;top:996.79px;font-size:18px;color:#e6e6e6;transform:scaleX(0.9420);">0.61</div>
<div class="t" style="left:1643px;top:983.79px;font-size:18px;color:#e6e6e6;transform:scaleX(0.9377);">Z:</div>
<div class="a" style="left:1661.7px;top:958.3px;width:104.29999999999995px;height:53.700000000000045px;background:#2b2b2b;border:1px solid #1d1d1d;border-radius:5px;box-sizing:border-box"></div>
<div class="a" style="left:1732px;top:959.3px;width:1px;height:51.700000000000045px;background:#282828;"></div>
<div class="a" style="left:1748.5px;top:959.3px;width:1px;height:51.700000000000045px;background:#282828;"></div>
<div class="a" style="left:1734px;top:982px;width:12px;height:2px;background:#e6e6e6;"></div>
<div class="a" style="left:1751px;top:982px;width:12px;height:2px;background:#e6e6e6;"></div>
<div class="a" style="left:1756px;top:977px;width:2px;height:12px;background:#e6e6e6;"></div>
<div class="t" style="left:1676px;top:983.79px;font-size:18px;color:#e6e6e6;transform:scaleX(0.9927);">447%</div>
<div class="t" style="left:1776.7px;top:983.79px;font-size:18px;color:#e6e6e6;transform:scaleX(0.8333);">R:</div>
<div class="a" style="left:1796px;top:958.3px;width:114px;height:53.700000000000045px;background:#2b2b2b;border:1px solid #1d1d1d;border-radius:5px;box-sizing:border-box"></div>
<div class="a" style="left:1876px;top:959.3px;width:1px;height:51.700000000000045px;background:#282828;"></div>
<div class="a" style="left:1892.5px;top:959.3px;width:1px;height:51.700000000000045px;background:#282828;"></div>
<div class="a" style="left:1878px;top:982px;width:12px;height:2px;background:#e6e6e6;"></div>
<div class="a" style="left:1895px;top:982px;width:12px;height:2px;background:#e6e6e6;"></div>
<div class="a" style="left:1900px;top:977px;width:2px;height:12px;background:#e6e6e6;"></div>
<div class="t" style="left:1820px;top:983.79px;font-size:18px;color:#e6e6e6;transform:scaleX(0.9874);">0.00°</div>
<div class="a" style="left:1871.5px;top:26.5px;width:48px;height:28px;background:#ffffe1;border:1px solid #d8d8c0;border-right:none;box-sizing:border-box;"></div>
<div class="t" style="left:1874.5px;top:41.63px;font-size:17px;color:#000000;transform:scaleX(0.9663);">Close</div>
</body></html>
